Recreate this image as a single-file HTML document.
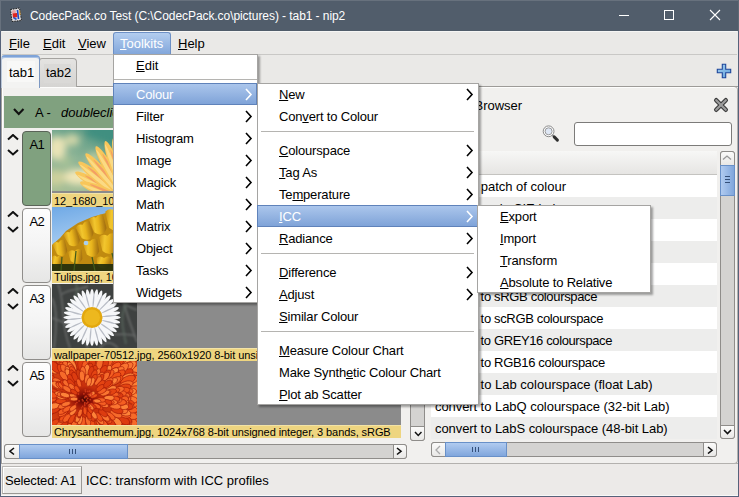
<!DOCTYPE html><html><head><meta charset="utf-8"><style>
*{margin:0;padding:0;box-sizing:border-box}
html,body{width:739px;height:497px;overflow:hidden;background:#eae9e7;position:relative;font-family:"Liberation Sans",sans-serif;color:#000}
.t{position:absolute;white-space:pre;line-height:1}
.u{text-decoration:underline;text-underline-offset:1px;text-decoration-thickness:1px}
.w{color:#fff}
</style></head><body>
<div style="position:absolute;left:0px;top:0px;width:739px;height:31px;background:#515d6b"></div>
<div style="position:absolute;left:0px;top:0px;width:739px;height:1px;background:#67717d"></div>
<div style="position:absolute;left:0px;top:0px;width:1px;height:31px;background:#67717d"></div>
<div style="position:absolute;left:738px;top:0px;width:1px;height:31px;background:#5f6975"></div>
<svg style="position:absolute;left:9px;top:7px" width="14" height="16">
<path d="M1.5,2.5 L10.5,1 L12.5,13.5 L3,14.5 Z" fill="#dcdadb" stroke="#1e1e1e" stroke-width="1" stroke-dasharray="1.5 1"/>
<circle cx="5" cy="5" r="2" fill="#e9a2a6"/><path d="M3.5,6.5 L8,6 L8.5,10 L4,11 Z" fill="#e2231d"/>
<path d="M8.5,3 L9.5,12" stroke="#1f49c9" stroke-width="1.6"/><path d="M10.5,3 L11,8" stroke="#e7a63a" stroke-width="1.2"/>
<path d="M4.5,10.5 L7.5,12.5" stroke="#2c56c6" stroke-width="1.6"/></svg>
<div class="t " style="left:30px;top:9.84px;font-size:12px;color:#fff;letter-spacing:-0.07px">CodecPack.co Test (C:\CodecPack.co\pictures) - tab1 - nip2</div>
<div style="position:absolute;left:619px;top:15px;width:10px;height:1px;background:#fff"></div>
<div style="position:absolute;left:664px;top:10px;width:10px;height:10px;border:1px solid #fff"></div>
<svg style="position:absolute;left:709px;top:9px" width="12" height="12"><path d="M1,1 L11,11 M11,1 L1,11" stroke="#fff" stroke-width="1.1"/></svg>
<div style="position:absolute;left:2px;top:31px;width:735px;height:1px;background:#f6f6f5"></div>
<div style="position:absolute;left:2px;top:54px;width:735px;height:1px;background:#c9c8c6"></div>
<div style="position:absolute;left:113px;top:32px;width:58px;height:23px;background:linear-gradient(#b3cdef,#80a5da);border:1px solid #6d90c5;border-bottom:none;border-radius:3px 3px 0 0"></div>
<div class="t " style="left:9px;top:36.99px;font-size:13px;"><span class="u">F</span>ile</div>
<div class="t " style="left:43px;top:36.99px;font-size:13px;"><span class="u">E</span>dit</div>
<div class="t " style="left:78px;top:36.99px;font-size:13px;"><span class="u">V</span>iew</div>
<div class="t " style="left:120px;top:36.99px;font-size:13px;color:#fff"><span class="u">T</span>oolkits</div>
<div class="t " style="left:178px;top:36.99px;font-size:13px;"><span class="u">H</span>elp</div>
<div style="position:absolute;left:1px;top:88px;width:737px;height:375px;background:#f1f0ee"></div>
<div style="position:absolute;left:1px;top:86px;width:737px;height:1px;background:#9d9b98"></div>
<div style="position:absolute;left:1px;top:87px;width:737px;height:1px;background:#fdfdfc"></div>
<div style="position:absolute;left:39px;top:58px;width:38px;height:29px;background:linear-gradient(#e4e3e1,#d5d4d2);border:1px solid #a5a3a0;border-bottom:none;border-radius:3px 4px 0 0"></div>
<div style="position:absolute;left:44px;top:64px;width:27px;height:19px;background:#dad9d7"></div>
<div class="t " style="left:46px;top:65.99px;font-size:13px;">tab2</div>
<div style="position:absolute;left:1px;top:55px;width:39px;height:33px;background:#f3f3f2;border-top:2px solid #7ea3d8;border-left:1px solid #b9c6d8;border-right:1px solid #7d98c2;border-radius:4px 4px 0 0;box-shadow:inset 0 1px 0 #a9c2e6"></div>
<div style="position:absolute;left:7px;top:61px;width:28px;height:21px;background:#f8f8f7"></div>
<div class="t " style="left:9px;top:65.99px;font-size:13px;">tab1</div>
<svg style="position:absolute;left:716px;top:63px" width="16" height="16">
<defs><linearGradient id="pg" x1="0" y1="0" x2="1" y2="1"><stop offset="0" stop-color="#a6d2f2"/><stop offset="1" stop-color="#5f9ed8"/></linearGradient></defs><path d="M6.3,1.3 h3.4 v5 h5 v3.4 h-5 v5 h-3.4 v-5 h-5 v-3.4 h5 z" fill="url(#pg)" stroke="#1d469a" stroke-width="1.1"/></svg>
<div style="position:absolute;left:4px;top:96px;width:423px;height:32px;background:#80a17f"></div>
<svg style="position:absolute;left:13px;top:108px" width="11.5" height="7.5"><polyline points="1,1 5.75,6.0 10.5,1" fill="none" stroke="#111" stroke-width="2.1"/></svg>
<div class="t " style="left:35px;top:105.99px;font-size:13px;">A - </div>
<div class="t " style="left:61px;top:105.99px;font-size:13px;font-style:italic">doubleclick to edit this toolkit</div>
<div style="position:absolute;left:52px;top:130px;width:349px;height:63px;background:#8b8b8b"></div>
<div style="position:absolute;left:52px;top:130px;width:98px;height:61px;overflow:hidden"><svg width="98" height="61"><defs>
<linearGradient id="fbg" x1="0" y1="1" x2="0.8" y2="0"><stop offset="0" stop-color="#a9bf95"/><stop offset="0.45" stop-color="#8db496"/><stop offset="1" stop-color="#3b8a7b"/></linearGradient>
<filter id="bl" x="-50%" y="-50%" width="200%" height="200%"><feGaussianBlur stdDeviation="3.5"/></filter>
</defs>
<rect width="98" height="61" fill="url(#fbg)"/>
<g filter="url(#bl)"><rect x="36" y="-8" width="70" height="22" fill="#3f8f80" transform="rotate(20 60 0)"/>
<ellipse cx="5" cy="18" rx="9" ry="12" fill="#e9e3b6"/><ellipse cx="20" cy="10" rx="8" ry="6" fill="#d2d6a8"/><ellipse cx="28" cy="47" rx="17" ry="8" fill="#f0e6b8"/><ellipse cx="4" cy="48" rx="9" ry="8" fill="#cdd09c"/><ellipse cx="42" cy="28" rx="7" ry="6" fill="#bccb9e"/><ellipse cx="14" cy="32" rx="6" ry="5" fill="#a7c296"/></g>
<g><ellipse cx="0" cy="-30.3" rx="5" ry="30.3" fill="#f8c65a" transform="translate(76,72) rotate(-60.4)"/><ellipse cx="1.8" cy="-27.3" rx="1.3" ry="23.3" fill="#ee6d74" opacity=".45" transform="translate(76,72) rotate(-60.4)"/><ellipse cx="-1.4" cy="-31.3" rx="1.8" ry="26.3" fill="#fde7a0" opacity=".6" transform="translate(76,72) rotate(-60.4)"/><ellipse cx="0" cy="-31.9" rx="5" ry="31.9" fill="#f8c65a" transform="translate(76,72) rotate(-50.9)"/><ellipse cx="1.8" cy="-28.9" rx="1.3" ry="24.9" fill="#ee6d74" opacity=".45" transform="translate(76,72) rotate(-50.9)"/><ellipse cx="-1.4" cy="-32.9" rx="1.8" ry="27.9" fill="#fde7a0" opacity=".6" transform="translate(76,72) rotate(-50.9)"/><ellipse cx="0" cy="-32.2" rx="5" ry="32.2" fill="#f8c65a" transform="translate(76,72) rotate(-41.1)"/><ellipse cx="1.8" cy="-29.2" rx="1.3" ry="25.2" fill="#ee6d74" opacity=".45" transform="translate(76,72) rotate(-41.1)"/><ellipse cx="-1.4" cy="-33.2" rx="1.8" ry="28.2" fill="#fde7a0" opacity=".6" transform="translate(76,72) rotate(-41.1)"/><ellipse cx="0" cy="-32.1" rx="5" ry="32.1" fill="#f8c65a" transform="translate(76,72) rotate(-29.9)"/><ellipse cx="1.8" cy="-29.1" rx="1.3" ry="25.1" fill="#ee6d74" opacity=".45" transform="translate(76,72) rotate(-29.9)"/><ellipse cx="-1.4" cy="-33.1" rx="1.8" ry="28.1" fill="#fde7a0" opacity=".6" transform="translate(76,72) rotate(-29.9)"/><ellipse cx="0" cy="-32.5" rx="5" ry="32.5" fill="#f8c65a" transform="translate(76,72) rotate(-20.4)"/><ellipse cx="1.8" cy="-29.5" rx="1.3" ry="25.5" fill="#ee6d74" opacity=".45" transform="translate(76,72) rotate(-20.4)"/><ellipse cx="-1.4" cy="-33.5" rx="1.8" ry="28.5" fill="#fde7a0" opacity=".6" transform="translate(76,72) rotate(-20.4)"/><ellipse cx="0" cy="-32.8" rx="5" ry="32.8" fill="#f8c65a" transform="translate(76,72) rotate(-12.7)"/><ellipse cx="1.8" cy="-29.8" rx="1.3" ry="25.8" fill="#ee6d74" opacity=".45" transform="translate(76,72) rotate(-12.7)"/><ellipse cx="-1.4" cy="-33.8" rx="1.8" ry="28.8" fill="#fde7a0" opacity=".6" transform="translate(76,72) rotate(-12.7)"/><ellipse cx="0" cy="-25.9" rx="5" ry="25.9" fill="#f8c65a" transform="translate(76,72) rotate(-67.6)"/><ellipse cx="1.8" cy="-22.9" rx="1.3" ry="18.9" fill="#ee6d74" opacity=".45" transform="translate(76,72) rotate(-67.6)"/><ellipse cx="-1.4" cy="-26.9" rx="1.8" ry="21.9" fill="#fde7a0" opacity=".6" transform="translate(76,72) rotate(-67.6)"/></g></svg></div>
<div style="position:absolute;left:52px;top:193px;width:349px;height:14px;background:#eed580;border-top:1px solid #f3e3a6"></div>
<div class="t " style="left:54px;top:196.19px;font-size:11px;letter-spacing:-0.08px">12_1680_1050 8-bit unsigned integer, 3 bands, sRGB</div>
<div style="position:absolute;left:22px;top:131px;width:29px;height:75px;background:#80a17f;border:1px solid #5a6458;border-radius:4px"></div>
<div class="t " style="left:29.5px;top:137.99px;font-size:13px;letter-spacing:-0.6px">A1</div>
<svg style="position:absolute;left:7px;top:134px" width="12" height="7"><polyline points="1,5.5 6.0,1 11,5.5" fill="none" stroke="#111" stroke-width="2"/></svg>
<svg style="position:absolute;left:7px;top:148.6px" width="12" height="7"><polyline points="1,1 6.0,5.5 11,1" fill="none" stroke="#111" stroke-width="2"/></svg>
<div style="position:absolute;left:52px;top:207px;width:349px;height:64px;background:#8b8b8b"></div>
<div style="position:absolute;left:52px;top:207px;width:85px;height:64px;overflow:hidden"><svg width="85" height="64"><defs><linearGradient id="sky" x1="0" y1="0" x2="0.3" y2="1"><stop offset="0" stop-color="#6fa9e6"/><stop offset="1" stop-color="#cde4f8"/></linearGradient>
<linearGradient id="tg" x1="0" y1="0" x2="1" y2="0.3"><stop offset="0" stop-color="#c88d10"/><stop offset="0.35" stop-color="#f2c62e"/><stop offset="0.6" stop-color="#e8b41c"/><stop offset="1" stop-color="#a87410"/></linearGradient></defs>
<rect width="85" height="64" fill="url(#sky)"/>
<path d="M0,38 L8,31 L14,24 L26,16 L40,10 L54,6 L70,3 L85,3 L85,64 L0,64z" fill="#c08a10"/><path d="M-9.0,-11.0 Q-4.5,-14.0 0,-11.0 Q4.5,-14.0 9.0,-11.0 L8.0,5.5 Q0,15.0 -8.0,5.5 Z" fill="url(#tg)" transform="translate(64,14) rotate(-10)"/><path d="M-7.0,-11.0 Q-3.5,-14.0 0,-11.0 Q3.5,-14.0 7.0,-11.0 L6.0,5.5 Q0,15.0 -6.0,5.5 Z" fill="url(#tg)" transform="translate(80,14) rotate(-5)"/><path d="M-7.5,-9.0 Q-3.75,-12.0 0,-9.0 Q3.75,-12.0 7.5,-9.0 L6.5,4.5 Q0,13.0 -6.5,4.5 Z" fill="url(#tg)" transform="translate(47,19) rotate(-20)"/><path d="M-7.5,-8.0 Q-3.75,-11.0 0,-8.0 Q3.75,-11.0 7.5,-8.0 L6.5,4.0 Q0,12.0 -6.5,4.0 Z" fill="url(#tg)" transform="translate(34,25) rotate(-25)"/><path d="M-7.0,-7.5 Q-3.5,-10.5 0,-7.5 Q3.5,-10.5 7.0,-7.5 L6.0,3.75 Q0,11.5 -6.0,3.75 Z" fill="url(#tg)" transform="translate(21,32) rotate(-25)"/><path d="M-6.5,-7.0 Q-3.25,-10.0 0,-7.0 Q3.25,-10.0 6.5,-7.0 L5.5,3.5 Q0,11.0 -5.5,3.5 Z" fill="url(#tg)" transform="translate(9,42) rotate(-20)"/><path d="M-8.5,-9.5 Q-4.25,-12.5 0,-9.5 Q4.25,-12.5 8.5,-9.5 L7.5,4.75 Q0,13.5 -7.5,4.75 Z" fill="url(#tg)" transform="translate(57,38) rotate(-10)"/><path d="M-7.5,-8.0 Q-3.75,-11.0 0,-8.0 Q3.75,-11.0 7.5,-8.0 L6.5,4.0 Q0,12.0 -6.5,4.0 Z" fill="url(#tg)" transform="translate(40,42) rotate(-15)"/><path d="M-7.5,-9.5 Q-3.75,-12.5 0,-9.5 Q3.75,-12.5 7.5,-9.5 L6.5,4.75 Q0,13.5 -6.5,4.75 Z" fill="url(#tg)" transform="translate(74,40) rotate(0)"/><path d="M-7.0,-6.0 Q-3.5,-9.0 0,-6.0 Q3.5,-9.0 7.0,-6.0 L6.0,3.0 Q0,10.0 -6.0,3.0 Z" fill="url(#tg)" transform="translate(24,50) rotate(-10)"/><path d="M-7.5,-5.0 Q-3.75,-8.0 0,-5.0 Q3.75,-8.0 7.5,-5.0 L6.5,2.5 Q0,9.0 -6.5,2.5 Z" fill="url(#tg)" transform="translate(52,56) rotate(0)"/><path d="M-6.0,-4.0 Q-3.0,-7.0 0,-4.0 Q3.0,-7.0 6.0,-4.0 L5.0,2.0 Q0,8.0 -5.0,2.0 Z" fill="url(#tg)" transform="translate(70,58) rotate(0)"/><path d="M-5.0,-5.0 Q-2.5,-8.0 0,-5.0 Q2.5,-8.0 5.0,-5.0 L4.0,2.5 Q0,9.0 -4.0,2.5 Z" fill="url(#tg)" transform="translate(5,55) rotate(0)"/><circle cx="34" cy="36" r="2.3" fill="#a9d0f2"/><rect y="57" width="85" height="7" fill="#1e2a0c" opacity=".9"/><g stroke="#3f5a1a" stroke-width="1.2"><path d="M24,44 L22,64"/><path d="M40,50 L43,64"/><path d="M60,46 L64,64"/><path d="M76,50 L78,64"/><path d="M10,50 L9,64"/></g>
<path d="M63,4 L64,16" stroke="#e0301c" stroke-width="1.2"/></svg></div>
<div style="position:absolute;left:52px;top:271px;width:349px;height:12px;background:#eed580;border-top:1px solid #f3e3a6"></div>
<div class="t " style="left:54px;top:272.19px;font-size:11px;letter-spacing:-0.08px">Tulips.jpg, 1024x768 8-bit unsigned integer, 3 bands, sRGB</div>
<div style="position:absolute;left:22px;top:208px;width:29px;height:75px;background:linear-gradient(#fdfdfd 0%,#f4f4f4 50%,#e6e6e5 100%);border:1px solid #8f8d8a;border-radius:4px"></div>
<div class="t " style="left:29.5px;top:214.99px;font-size:13px;letter-spacing:-0.6px">A2</div>
<svg style="position:absolute;left:7px;top:211px" width="12" height="7"><polyline points="1,5.5 6.0,1 11,5.5" fill="none" stroke="#111" stroke-width="2"/></svg>
<svg style="position:absolute;left:7px;top:225.6px" width="12" height="7"><polyline points="1,1 6.0,5.5 11,1" fill="none" stroke="#111" stroke-width="2"/></svg>
<div style="position:absolute;left:52px;top:284px;width:349px;height:64px;background:#8b8b8b"></div>
<div style="position:absolute;left:52px;top:284px;width:85px;height:64px;overflow:hidden"><svg width="85" height="64"><defs><filter id="bl2"><feGaussianBlur stdDeviation="0.5"/></filter><filter id="bl3"><feGaussianBlur stdDeviation="1"/></filter></defs><rect width="85" height="64" fill="#3e4140"/>
<g stroke="#7a7c7b" stroke-width="1.6" fill="none" opacity=".7" filter="url(#bl3)"><path d="M6,0 C14,20 8,40 18,64"/><path d="M70,12 C74,30 80,44 85,58"/><path d="M0,34 C20,40 30,50 36,64"/><path d="M10,10 C20,4 30,6 36,2"/><path d="M58,50 C66,52 72,48 84,52"/><path d="M62,0 C66,14 72,22 85,26"/><path d="M0,14 C6,24 4,50 2,64"/><path d="M48,64 C54,56 60,58 66,64"/></g>
<g stroke="#5c6a60" stroke-width="2.5" fill="none" opacity=".6" filter="url(#bl3)"><path d="M74,60 C70,40 66,30 80,10"/><path d="M24,0 C28,10 20,20 14,30"/></g>
<g filter="url(#bl2)"><ellipse cx="0" cy="-18.8" rx="2.2" ry="9.8" fill="#f6f7f9" transform="translate(40,33.5) rotate(0.0)" /><ellipse cx="0" cy="-18.8" rx="2.2" ry="9.8" fill="#f6f7f9" transform="translate(40,33.5) rotate(10.0)" /><ellipse cx="0" cy="-18.8" rx="2.2" ry="9.8" fill="#f6f7f9" transform="translate(40,33.5) rotate(20.0)" /><ellipse cx="0" cy="-18.8" rx="2.2" ry="9.8" fill="#f6f7f9" transform="translate(40,33.5) rotate(30.0)" /><ellipse cx="0" cy="-18.8" rx="2.2" ry="9.8" fill="#f6f7f9" transform="translate(40,33.5) rotate(40.0)" /><ellipse cx="0" cy="-18.8" rx="2.2" ry="9.8" fill="#f6f7f9" transform="translate(40,33.5) rotate(50.0)" /><ellipse cx="0" cy="-18.8" rx="2.2" ry="9.8" fill="#f6f7f9" transform="translate(40,33.5) rotate(60.0)" /><ellipse cx="0" cy="-18.8" rx="2.2" ry="9.8" fill="#f6f7f9" transform="translate(40,33.5) rotate(70.0)" /><ellipse cx="0" cy="-18.8" rx="2.2" ry="9.8" fill="#f6f7f9" transform="translate(40,33.5) rotate(80.0)" /><ellipse cx="0" cy="-18.8" rx="2.2" ry="9.8" fill="#f6f7f9" transform="translate(40,33.5) rotate(90.0)" /><ellipse cx="0" cy="-18.8" rx="2.2" ry="9.8" fill="#f6f7f9" transform="translate(40,33.5) rotate(100.0)" /><ellipse cx="0" cy="-18.8" rx="2.2" ry="9.8" fill="#f6f7f9" transform="translate(40,33.5) rotate(110.0)" /><ellipse cx="0" cy="-18.8" rx="2.2" ry="9.8" fill="#f6f7f9" transform="translate(40,33.5) rotate(120.0)" /><ellipse cx="0" cy="-18.8" rx="2.2" ry="9.8" fill="#f6f7f9" transform="translate(40,33.5) rotate(130.0)" /><ellipse cx="0" cy="-18.8" rx="2.2" ry="9.8" fill="#f6f7f9" transform="translate(40,33.5) rotate(140.0)" /><ellipse cx="0" cy="-18.8" rx="2.2" ry="9.8" fill="#f6f7f9" transform="translate(40,33.5) rotate(150.0)" /><ellipse cx="0" cy="-18.8" rx="2.2" ry="9.8" fill="#f6f7f9" transform="translate(40,33.5) rotate(160.0)" /><ellipse cx="0" cy="-18.8" rx="2.2" ry="9.8" fill="#f6f7f9" transform="translate(40,33.5) rotate(170.0)" /><ellipse cx="0" cy="-18.8" rx="2.2" ry="9.8" fill="#f6f7f9" transform="translate(40,33.5) rotate(180.0)" /><ellipse cx="0" cy="-18.8" rx="2.2" ry="9.8" fill="#f6f7f9" transform="translate(40,33.5) rotate(190.0)" /><ellipse cx="0" cy="-18.8" rx="2.2" ry="9.8" fill="#f6f7f9" transform="translate(40,33.5) rotate(200.0)" /><ellipse cx="0" cy="-18.8" rx="2.2" ry="9.8" fill="#f6f7f9" transform="translate(40,33.5) rotate(210.0)" /><ellipse cx="0" cy="-18.8" rx="2.2" ry="9.8" fill="#f6f7f9" transform="translate(40,33.5) rotate(220.0)" /><ellipse cx="0" cy="-18.8" rx="2.2" ry="9.8" fill="#f6f7f9" transform="translate(40,33.5) rotate(230.0)" /><ellipse cx="0" cy="-18.8" rx="2.2" ry="9.8" fill="#f6f7f9" transform="translate(40,33.5) rotate(240.0)" /><ellipse cx="0" cy="-18.8" rx="2.2" ry="9.8" fill="#f6f7f9" transform="translate(40,33.5) rotate(250.0)" /><ellipse cx="0" cy="-18.8" rx="2.2" ry="9.8" fill="#f6f7f9" transform="translate(40,33.5) rotate(260.0)" /><ellipse cx="0" cy="-18.8" rx="2.2" ry="9.8" fill="#f6f7f9" transform="translate(40,33.5) rotate(270.0)" /><ellipse cx="0" cy="-18.8" rx="2.2" ry="9.8" fill="#f6f7f9" transform="translate(40,33.5) rotate(280.0)" /><ellipse cx="0" cy="-18.8" rx="2.2" ry="9.8" fill="#f6f7f9" transform="translate(40,33.5) rotate(290.0)" /><ellipse cx="0" cy="-18.8" rx="2.2" ry="9.8" fill="#f6f7f9" transform="translate(40,33.5) rotate(300.0)" /><ellipse cx="0" cy="-18.8" rx="2.2" ry="9.8" fill="#f6f7f9" transform="translate(40,33.5) rotate(310.0)" /><ellipse cx="0" cy="-18.8" rx="2.2" ry="9.8" fill="#f6f7f9" transform="translate(40,33.5) rotate(320.0)" /><ellipse cx="0" cy="-18.8" rx="2.2" ry="9.8" fill="#f6f7f9" transform="translate(40,33.5) rotate(330.0)" /><ellipse cx="0" cy="-18.8" rx="2.2" ry="9.8" fill="#f6f7f9" transform="translate(40,33.5) rotate(340.0)" /><ellipse cx="0" cy="-18.8" rx="2.2" ry="9.8" fill="#f6f7f9" transform="translate(40,33.5) rotate(350.0)" /><ellipse cx="0" cy="-17.5" rx="0.7" ry="7.5" fill="#b9bdc6" transform="translate(40,33.5) rotate(5.0)" /><ellipse cx="0" cy="-17.5" rx="0.7" ry="7.5" fill="#b9bdc6" transform="translate(40,33.5) rotate(25.0)" /><ellipse cx="0" cy="-17.5" rx="0.7" ry="7.5" fill="#b9bdc6" transform="translate(40,33.5) rotate(45.0)" /><ellipse cx="0" cy="-17.5" rx="0.7" ry="7.5" fill="#b9bdc6" transform="translate(40,33.5) rotate(65.0)" /><ellipse cx="0" cy="-17.5" rx="0.7" ry="7.5" fill="#b9bdc6" transform="translate(40,33.5) rotate(85.0)" /><ellipse cx="0" cy="-17.5" rx="0.7" ry="7.5" fill="#b9bdc6" transform="translate(40,33.5) rotate(105.0)" /><ellipse cx="0" cy="-17.5" rx="0.7" ry="7.5" fill="#b9bdc6" transform="translate(40,33.5) rotate(125.0)" /><ellipse cx="0" cy="-17.5" rx="0.7" ry="7.5" fill="#b9bdc6" transform="translate(40,33.5) rotate(145.0)" /><ellipse cx="0" cy="-17.5" rx="0.7" ry="7.5" fill="#b9bdc6" transform="translate(40,33.5) rotate(165.0)" /><ellipse cx="0" cy="-17.5" rx="0.7" ry="7.5" fill="#b9bdc6" transform="translate(40,33.5) rotate(185.0)" /><ellipse cx="0" cy="-17.5" rx="0.7" ry="7.5" fill="#b9bdc6" transform="translate(40,33.5) rotate(205.0)" /><ellipse cx="0" cy="-17.5" rx="0.7" ry="7.5" fill="#b9bdc6" transform="translate(40,33.5) rotate(225.0)" /><ellipse cx="0" cy="-17.5" rx="0.7" ry="7.5" fill="#b9bdc6" transform="translate(40,33.5) rotate(245.0)" /><ellipse cx="0" cy="-17.5" rx="0.7" ry="7.5" fill="#b9bdc6" transform="translate(40,33.5) rotate(265.0)" /><ellipse cx="0" cy="-17.5" rx="0.7" ry="7.5" fill="#b9bdc6" transform="translate(40,33.5) rotate(285.0)" /><ellipse cx="0" cy="-17.5" rx="0.7" ry="7.5" fill="#b9bdc6" transform="translate(40,33.5) rotate(305.0)" /><ellipse cx="0" cy="-17.5" rx="0.7" ry="7.5" fill="#b9bdc6" transform="translate(40,33.5) rotate(325.0)" /><ellipse cx="0" cy="-17.5" rx="0.7" ry="7.5" fill="#b9bdc6" transform="translate(40,33.5) rotate(345.0)" /></g>
<circle cx="40" cy="33.5" r="10.5" fill="#e3a80e"/><circle cx="40" cy="33.5" r="8" fill="#edb81e"/></svg></div>
<div style="position:absolute;left:52px;top:348px;width:349px;height:13px;background:#eed580;border-top:1px solid #f3e3a6"></div>
<div class="t " style="left:54px;top:350.19px;font-size:11px;letter-spacing:-0.08px">wallpaper-70512.jpg, 2560x1920 8-bit unsigned integer, 3 bands, sRGB</div>
<div style="position:absolute;left:22px;top:285px;width:29px;height:75px;background:linear-gradient(#fdfdfd 0%,#f4f4f4 50%,#e6e6e5 100%);border:1px solid #8f8d8a;border-radius:4px"></div>
<div class="t " style="left:29.5px;top:291.99px;font-size:13px;letter-spacing:-0.6px">A3</div>
<svg style="position:absolute;left:7px;top:288px" width="12" height="7"><polyline points="1,5.5 6.0,1 11,5.5" fill="none" stroke="#111" stroke-width="2"/></svg>
<svg style="position:absolute;left:7px;top:302.6px" width="12" height="7"><polyline points="1,1 6.0,5.5 11,1" fill="none" stroke="#111" stroke-width="2"/></svg>
<div style="position:absolute;left:52px;top:361px;width:349px;height:64px;background:#8b8b8b"></div>
<div style="position:absolute;left:52px;top:361px;width:85px;height:64px;overflow:hidden"><svg width="85" height="64"><defs><radialGradient id="cg" cx="0.38" cy="0.6" r="0.7"><stop offset="0" stop-color="#3a0402"/><stop offset="0.12" stop-color="#8a1006"/><stop offset="0.3" stop-color="#c8300c"/><stop offset="1" stop-color="#d84814"/></radialGradient></defs>
<rect width="85" height="64" fill="url(#cg)"/><ellipse cx="87" cy="-1" rx="5.0" ry="9.9" fill="#f66a2a" stroke="#a01806" stroke-width=".6" transform="rotate(54 87 -1)"/><ellipse cx="87" cy="-0" rx="4.9" ry="9.8" fill="#dc3c10" stroke="#a01806" stroke-width=".6" transform="rotate(54 87 -0)"/><ellipse cx="82" cy="-6" rx="4.9" ry="9.8" fill="#dc3c10" stroke="#a01806" stroke-width=".6" transform="rotate(48 82 -6)"/><ellipse cx="83" cy="-5" rx="4.9" ry="9.8" fill="#e44412" stroke="#a01806" stroke-width=".6" transform="rotate(49 83 -5)"/><ellipse cx="84" cy="-3" rx="4.9" ry="9.8" fill="#f45e22" stroke="#a01806" stroke-width=".6" transform="rotate(51 84 -3)"/><ellipse cx="90" cy="70" rx="4.9" ry="9.8" fill="#f66a2a" stroke="#a01806" stroke-width=".6" transform="rotate(119 90 70)"/><ellipse cx="93" cy="12" rx="4.9" ry="9.7" fill="#f45e22" stroke="#a01806" stroke-width=".6" transform="rotate(66 93 12)"/><ellipse cx="80" cy="-7" rx="4.9" ry="9.7" fill="#f45e22" stroke="#a01806" stroke-width=".6" transform="rotate(46 80 -7)"/><ellipse cx="89" cy="5" rx="4.9" ry="9.7" fill="#f66a2a" stroke="#a01806" stroke-width=".6" transform="rotate(59 89 5)"/><ellipse cx="89" cy="69" rx="4.8" ry="9.6" fill="#ee5018" stroke="#a01806" stroke-width=".6" transform="rotate(118 89 69)"/><ellipse cx="92" cy="64" rx="4.8" ry="9.6" fill="#e44412" stroke="#a01806" stroke-width=".6" transform="rotate(113 92 64)"/><ellipse cx="80" cy="-3" rx="4.7" ry="9.4" fill="#e44412" stroke="#a01806" stroke-width=".6" transform="rotate(49 80 -3)"/><ellipse cx="76" cy="-7" rx="4.7" ry="9.4" fill="#ee5018" stroke="#a01806" stroke-width=".6" transform="rotate(43 76 -7)"/><ellipse cx="75" cy="-8" rx="4.7" ry="9.4" fill="#f45e22" stroke="#a01806" stroke-width=".6" transform="rotate(42 75 -8)"/><ellipse cx="90" cy="13" rx="4.7" ry="9.4" fill="#f45e22" stroke="#a01806" stroke-width=".6" transform="rotate(66 90 13)"/><ellipse cx="86" cy="5" rx="4.7" ry="9.4" fill="#ee5018" stroke="#a01806" stroke-width=".6" transform="rotate(58 86 5)"/><ellipse cx="85" cy="5" rx="4.7" ry="9.4" fill="#f45e22" stroke="#a01806" stroke-width=".6" transform="rotate(58 85 5)"/><ellipse cx="87" cy="9" rx="4.7" ry="9.4" fill="#ee5018" stroke="#a01806" stroke-width=".6" transform="rotate(61 87 9)"/><ellipse cx="81" cy="-0" rx="4.7" ry="9.4" fill="#f66a2a" stroke="#a01806" stroke-width=".6" transform="rotate(52 81 -0)"/><ellipse cx="88" cy="10" rx="4.7" ry="9.3" fill="#fa7430" stroke="#a01806" stroke-width=".6" transform="rotate(63 88 10)"/><ellipse cx="93" cy="28" rx="4.6" ry="9.2" fill="#f45e22" stroke="#a01806" stroke-width=".6" transform="rotate(80 93 28)"/><ellipse cx="91" cy="53" rx="4.6" ry="9.2" fill="#f66a2a" stroke="#a01806" stroke-width=".6" transform="rotate(104 91 53)"/><ellipse cx="90" cy="22" rx="4.6" ry="9.1" fill="#fa7430" stroke="#a01806" stroke-width=".6" transform="rotate(74 90 22)"/><ellipse cx="83" cy="6" rx="4.6" ry="9.1" fill="#f45e22" stroke="#a01806" stroke-width=".6" transform="rotate(57 83 6)"/><ellipse cx="85" cy="66" rx="4.6" ry="9.1" fill="#fd8238" stroke="#a01806" stroke-width=".6" transform="rotate(118 85 66)"/><ellipse cx="89" cy="59" rx="4.5" ry="9.1" fill="#f45e22" stroke="#a01806" stroke-width=".6" transform="rotate(110 89 59)"/><ellipse cx="89" cy="20" rx="4.5" ry="9.1" fill="#f45e22" stroke="#a01806" stroke-width=".6" transform="rotate(72 89 20)"/><ellipse cx="92" cy="39" rx="4.5" ry="9.1" fill="#dc3c10" stroke="#a01806" stroke-width=".6" transform="rotate(91 92 39)"/><ellipse cx="90" cy="52" rx="4.5" ry="9.0" fill="#ee5018" stroke="#a01806" stroke-width=".6" transform="rotate(104 90 52)"/><ellipse cx="89" cy="22" rx="4.5" ry="9.0" fill="#f66a2a" stroke="#a01806" stroke-width=".6" transform="rotate(74 89 22)"/><ellipse cx="89" cy="22" rx="4.5" ry="9.0" fill="#ee5018" stroke="#a01806" stroke-width=".6" transform="rotate(73 89 22)"/><ellipse cx="84" cy="10" rx="4.5" ry="9.0" fill="#fd8238" stroke="#a01806" stroke-width=".6" transform="rotate(61 84 10)"/><ellipse cx="-8" cy="-4" rx="4.5" ry="9.0" fill="#ee5018" stroke="#a01806" stroke-width=".6" transform="rotate(316 -8 -4)"/><ellipse cx="91" cy="44" rx="4.5" ry="9.0" fill="#f45e22" stroke="#a01806" stroke-width=".6" transform="rotate(96 91 44)"/><ellipse cx="87" cy="20" rx="4.4" ry="8.9" fill="#fa7430" stroke="#a01806" stroke-width=".6" transform="rotate(71 87 20)"/><ellipse cx="-3" cy="-7" rx="4.4" ry="8.8" fill="#f66a2a" stroke="#a01806" stroke-width=".6" transform="rotate(322 -3 -7)"/><ellipse cx="85" cy="16" rx="4.4" ry="8.8" fill="#fa7430" stroke="#a01806" stroke-width=".6" transform="rotate(67 85 16)"/><ellipse cx="88" cy="53" rx="4.4" ry="8.8" fill="#ee5018" stroke="#a01806" stroke-width=".6" transform="rotate(105 88 53)"/><ellipse cx="72" cy="-3" rx="4.4" ry="8.8" fill="#f45e22" stroke="#a01806" stroke-width=".6" transform="rotate(44 72 -3)"/><ellipse cx="77" cy="3" rx="4.4" ry="8.8" fill="#fd8238" stroke="#a01806" stroke-width=".6" transform="rotate(51 77 3)"/><ellipse cx="86" cy="56" rx="4.4" ry="8.8" fill="#fd8238" stroke="#a01806" stroke-width=".6" transform="rotate(108 86 56)"/><ellipse cx="87" cy="22" rx="4.4" ry="8.7" fill="#fa7430" stroke="#a01806" stroke-width=".6" transform="rotate(73 87 22)"/><ellipse cx="86" cy="57" rx="4.4" ry="8.7" fill="#fa7430" stroke="#a01806" stroke-width=".6" transform="rotate(109 86 57)"/><ellipse cx="87" cy="51" rx="4.3" ry="8.7" fill="#fd8238" stroke="#a01806" stroke-width=".6" transform="rotate(103 87 51)"/><ellipse cx="85" cy="58" rx="4.3" ry="8.6" fill="#dc3c10" stroke="#a01806" stroke-width=".6" transform="rotate(110 85 58)"/><ellipse cx="0" cy="-6" rx="4.3" ry="8.6" fill="#dc3c10" stroke="#a01806" stroke-width=".6" transform="rotate(324 0 -6)"/><ellipse cx="77" cy="6" rx="4.3" ry="8.6" fill="#fd8238" stroke="#a01806" stroke-width=".6" transform="rotate(53 77 6)"/><ellipse cx="81" cy="64" rx="4.3" ry="8.6" fill="#f66a2a" stroke="#a01806" stroke-width=".6" transform="rotate(118 81 64)"/><ellipse cx="86" cy="43" rx="4.2" ry="8.5" fill="#f45e22" stroke="#a01806" stroke-width=".6" transform="rotate(95 86 43)"/><ellipse cx="84" cy="23" rx="4.2" ry="8.5" fill="#e44412" stroke="#a01806" stroke-width=".6" transform="rotate(74 84 23)"/><ellipse cx="-1" cy="-4" rx="4.2" ry="8.5" fill="#f66a2a" stroke="#a01806" stroke-width=".6" transform="rotate(321 -1 -4)"/><ellipse cx="2" cy="-6" rx="4.2" ry="8.5" fill="#ee5018" stroke="#a01806" stroke-width=".6" transform="rotate(326 2 -6)"/><ellipse cx="-4" cy="-1" rx="4.2" ry="8.4" fill="#fd8238" stroke="#a01806" stroke-width=".6" transform="rotate(318 -4 -1)"/><ellipse cx="80" cy="63" rx="4.2" ry="8.4" fill="#fa7430" stroke="#a01806" stroke-width=".6" transform="rotate(117 80 63)"/><ellipse cx="82" cy="57" rx="4.2" ry="8.4" fill="#f45e22" stroke="#a01806" stroke-width=".6" transform="rotate(111 82 57)"/><ellipse cx="-2" cy="-2" rx="4.2" ry="8.4" fill="#ee5018" stroke="#a01806" stroke-width=".6" transform="rotate(319 -2 -2)"/><ellipse cx="75" cy="70" rx="4.2" ry="8.4" fill="#e44412" stroke="#a01806" stroke-width=".6" transform="rotate(126 75 70)"/><ellipse cx="-3" cy="-1" rx="4.2" ry="8.3" fill="#f66a2a" stroke="#a01806" stroke-width=".6" transform="rotate(318 -3 -1)"/><ellipse cx="83" cy="28" rx="4.1" ry="8.3" fill="#fd8238" stroke="#a01806" stroke-width=".6" transform="rotate(78 83 28)"/><ellipse cx="74" cy="7" rx="4.1" ry="8.2" fill="#fa7430" stroke="#a01806" stroke-width=".6" transform="rotate(53 74 7)"/><ellipse cx="84" cy="35" rx="4.1" ry="8.2" fill="#f66a2a" stroke="#a01806" stroke-width=".6" transform="rotate(86 84 35)"/><ellipse cx="-4" cy="2" rx="4.1" ry="8.2" fill="#f45e22" stroke="#a01806" stroke-width=".6" transform="rotate(315 -4 2)"/><ellipse cx="9" cy="-7" rx="4.1" ry="8.2" fill="#dc3c10" stroke="#a01806" stroke-width=".6" transform="rotate(333 9 -7)"/><ellipse cx="76" cy="66" rx="4.1" ry="8.2" fill="#fd8238" stroke="#a01806" stroke-width=".6" transform="rotate(122 76 66)"/><ellipse cx="1" cy="-2" rx="4.1" ry="8.1" fill="#f66a2a" stroke="#a01806" stroke-width=".6" transform="rotate(322 1 -2)"/><ellipse cx="80" cy="20" rx="4.1" ry="8.1" fill="#e44412" stroke="#a01806" stroke-width=".6" transform="rotate(68 80 20)"/><ellipse cx="83" cy="33" rx="4.1" ry="8.1" fill="#e44412" stroke="#a01806" stroke-width=".6" transform="rotate(83 83 33)"/><ellipse cx="-7" cy="70" rx="4.1" ry="8.1" fill="#f66a2a" stroke="#a01806" stroke-width=".6" transform="rotate(231 -7 70)"/><ellipse cx="78" cy="60" rx="4.1" ry="8.1" fill="#f66a2a" stroke="#a01806" stroke-width=".6" transform="rotate(115 78 60)"/><ellipse cx="81" cy="24" rx="4.1" ry="8.1" fill="#fd8238" stroke="#a01806" stroke-width=".6" transform="rotate(74 81 24)"/><ellipse cx="8" cy="-6" rx="4.0" ry="8.1" fill="#dc3c10" stroke="#a01806" stroke-width=".6" transform="rotate(331 8 -6)"/><ellipse cx="78" cy="16" rx="4.0" ry="8.1" fill="#f45e22" stroke="#a01806" stroke-width=".6" transform="rotate(64 78 16)"/><ellipse cx="82" cy="29" rx="4.0" ry="8.1" fill="#f66a2a" stroke="#a01806" stroke-width=".6" transform="rotate(79 82 29)"/><ellipse cx="79" cy="19" rx="4.0" ry="8.1" fill="#f66a2a" stroke="#a01806" stroke-width=".6" transform="rotate(67 79 19)"/><ellipse cx="82" cy="34" rx="4.0" ry="8.0" fill="#f66a2a" stroke="#a01806" stroke-width=".6" transform="rotate(85 82 34)"/><ellipse cx="15" cy="-8" rx="4.0" ry="8.0" fill="#dc3c10" stroke="#a01806" stroke-width=".6" transform="rotate(339 15 -8)"/><ellipse cx="63" cy="-0" rx="4.0" ry="8.0" fill="#f66a2a" stroke="#a01806" stroke-width=".6" transform="rotate(39 63 -0)"/><ellipse cx="73" cy="66" rx="4.0" ry="8.0" fill="#f66a2a" stroke="#a01806" stroke-width=".6" transform="rotate(124 73 66)"/><ellipse cx="66" cy="2" rx="4.0" ry="7.9" fill="#e44412" stroke="#a01806" stroke-width=".6" transform="rotate(43 66 2)"/><ellipse cx="74" cy="13" rx="4.0" ry="7.9" fill="#dc3c10" stroke="#a01806" stroke-width=".6" transform="rotate(59 74 13)"/><ellipse cx="76" cy="18" rx="3.9" ry="7.9" fill="#f45e22" stroke="#a01806" stroke-width=".6" transform="rotate(65 76 18)"/><ellipse cx="74" cy="64" rx="3.9" ry="7.9" fill="#f66a2a" stroke="#a01806" stroke-width=".6" transform="rotate(122 74 64)"/><ellipse cx="79" cy="53" rx="3.9" ry="7.9" fill="#f45e22" stroke="#a01806" stroke-width=".6" transform="rotate(108 79 53)"/><ellipse cx="78" cy="54" rx="3.9" ry="7.9" fill="#f66a2a" stroke="#a01806" stroke-width=".6" transform="rotate(109 78 54)"/><ellipse cx="70" cy="8" rx="3.9" ry="7.9" fill="#fa7430" stroke="#a01806" stroke-width=".6" transform="rotate(50 70 8)"/><ellipse cx="80" cy="44" rx="3.9" ry="7.8" fill="#fd8238" stroke="#a01806" stroke-width=".6" transform="rotate(97 80 44)"/><ellipse cx="75" cy="17" rx="3.9" ry="7.8" fill="#fd8238" stroke="#a01806" stroke-width=".6" transform="rotate(64 75 17)"/><ellipse cx="76" cy="19" rx="3.9" ry="7.8" fill="#ee5018" stroke="#a01806" stroke-width=".6" transform="rotate(66 76 19)"/><ellipse cx="-2" cy="6" rx="3.9" ry="7.8" fill="#ee5018" stroke="#a01806" stroke-width=".6" transform="rotate(314 -2 6)"/><ellipse cx="-7" cy="64" rx="3.9" ry="7.7" fill="#f66a2a" stroke="#a01806" stroke-width=".6" transform="rotate(237 -7 64)"/><ellipse cx="8" cy="-1" rx="3.9" ry="7.7" fill="#f66a2a" stroke="#a01806" stroke-width=".6" transform="rotate(328 8 -1)"/><ellipse cx="9" cy="-2" rx="3.9" ry="7.7" fill="#fa7430" stroke="#a01806" stroke-width=".6" transform="rotate(330 9 -2)"/><ellipse cx="79" cy="41" rx="3.9" ry="7.7" fill="#fd8238" stroke="#a01806" stroke-width=".6" transform="rotate(93 79 41)"/><ellipse cx="78" cy="48" rx="3.8" ry="7.7" fill="#f45e22" stroke="#a01806" stroke-width=".6" transform="rotate(102 78 48)"/><ellipse cx="1" cy="4" rx="3.8" ry="7.6" fill="#dc3c10" stroke="#a01806" stroke-width=".6" transform="rotate(318 1 4)"/><ellipse cx="79" cy="35" rx="3.8" ry="7.6" fill="#fd8238" stroke="#a01806" stroke-width=".6" transform="rotate(86 79 35)"/><ellipse cx="70" cy="65" rx="3.8" ry="7.6" fill="#f66a2a" stroke="#a01806" stroke-width=".6" transform="rotate(125 70 65)"/><ellipse cx="-5" cy="12" rx="3.8" ry="7.6" fill="#f66a2a" stroke="#a01806" stroke-width=".6" transform="rotate(305 -5 12)"/><ellipse cx="78" cy="43" rx="3.8" ry="7.6" fill="#f66a2a" stroke="#a01806" stroke-width=".6" transform="rotate(95 78 43)"/><ellipse cx="17" cy="-5" rx="3.8" ry="7.6" fill="#f45e22" stroke="#a01806" stroke-width=".6" transform="rotate(341 17 -5)"/><ellipse cx="30" cy="-7" rx="3.8" ry="7.6" fill="#ee5018" stroke="#a01806" stroke-width=".6" transform="rotate(357 30 -7)"/><ellipse cx="12" cy="-2" rx="3.8" ry="7.6" fill="#dc3c10" stroke="#a01806" stroke-width=".6" transform="rotate(334 12 -2)"/><ellipse cx="-0" cy="7" rx="3.8" ry="7.6" fill="#fd8238" stroke="#a01806" stroke-width=".6" transform="rotate(314 -0 7)"/><ellipse cx="73" cy="59" rx="3.8" ry="7.5" fill="#fd8238" stroke="#a01806" stroke-width=".6" transform="rotate(117 73 59)"/><ellipse cx="77" cy="31" rx="3.8" ry="7.5" fill="#fd8238" stroke="#a01806" stroke-width=".6" transform="rotate(80 77 31)"/><ellipse cx="78" cy="39" rx="3.8" ry="7.5" fill="#fa7430" stroke="#a01806" stroke-width=".6" transform="rotate(90 78 39)"/><ellipse cx="-7" cy="61" rx="3.8" ry="7.5" fill="#e44412" stroke="#a01806" stroke-width=".6" transform="rotate(241 -7 61)"/><ellipse cx="3" cy="5" rx="3.7" ry="7.5" fill="#dc3c10" stroke="#a01806" stroke-width=".6" transform="rotate(318 3 5)"/><ellipse cx="71" cy="62" rx="3.7" ry="7.5" fill="#fd8238" stroke="#a01806" stroke-width=".6" transform="rotate(122 71 62)"/><ellipse cx="71" cy="60" rx="3.7" ry="7.5" fill="#e44412" stroke="#a01806" stroke-width=".6" transform="rotate(119 71 60)"/><ellipse cx="20" cy="-4" rx="3.7" ry="7.5" fill="#f66a2a" stroke="#a01806" stroke-width=".6" transform="rotate(344 20 -4)"/><ellipse cx="11" cy="-1" rx="3.7" ry="7.5" fill="#f66a2a" stroke="#a01806" stroke-width=".6" transform="rotate(331 11 -1)"/><ellipse cx="73" cy="58" rx="3.7" ry="7.4" fill="#dc3c10" stroke="#a01806" stroke-width=".6" transform="rotate(115 73 58)"/><ellipse cx="63" cy="7" rx="3.7" ry="7.4" fill="#f45e22" stroke="#a01806" stroke-width=".6" transform="rotate(44 63 7)"/><ellipse cx="74" cy="24" rx="3.7" ry="7.4" fill="#f66a2a" stroke="#a01806" stroke-width=".6" transform="rotate(71 74 24)"/><ellipse cx="-8" cy="20" rx="3.7" ry="7.4" fill="#ee5018" stroke="#a01806" stroke-width=".6" transform="rotate(294 -8 20)"/><ellipse cx="3" cy="6" rx="3.7" ry="7.4" fill="#dc3c10" stroke="#a01806" stroke-width=".6" transform="rotate(318 3 6)"/><ellipse cx="-7" cy="19" rx="3.7" ry="7.4" fill="#fa7430" stroke="#a01806" stroke-width=".6" transform="rotate(296 -7 19)"/><ellipse cx="40" cy="-5" rx="3.7" ry="7.4" fill="#fd8238" stroke="#a01806" stroke-width=".6" transform="rotate(10 40 -5)"/><ellipse cx="71" cy="59" rx="3.7" ry="7.3" fill="#dc3c10" stroke="#a01806" stroke-width=".6" transform="rotate(118 71 59)"/><ellipse cx="-5" cy="17" rx="3.7" ry="7.3" fill="#fd8238" stroke="#a01806" stroke-width=".6" transform="rotate(299 -5 17)"/><ellipse cx="37" cy="-5" rx="3.7" ry="7.3" fill="#fa7430" stroke="#a01806" stroke-width=".6" transform="rotate(7 37 -5)"/><ellipse cx="66" cy="11" rx="3.7" ry="7.3" fill="#fa7430" stroke="#a01806" stroke-width=".6" transform="rotate(51 66 11)"/><ellipse cx="-5" cy="17" rx="3.6" ry="7.3" fill="#ee5018" stroke="#a01806" stroke-width=".6" transform="rotate(300 -5 17)"/><ellipse cx="75" cy="42" rx="3.6" ry="7.3" fill="#e44412" stroke="#a01806" stroke-width=".6" transform="rotate(95 75 42)"/><ellipse cx="56" cy="2" rx="3.6" ry="7.3" fill="#f45e22" stroke="#a01806" stroke-width=".6" transform="rotate(33 56 2)"/><ellipse cx="46" cy="-2" rx="3.6" ry="7.3" fill="#f45e22" stroke="#a01806" stroke-width=".6" transform="rotate(19 46 -2)"/><ellipse cx="75" cy="45" rx="3.6" ry="7.3" fill="#f66a2a" stroke="#a01806" stroke-width=".6" transform="rotate(98 75 45)"/><ellipse cx="-8" cy="25" rx="3.6" ry="7.2" fill="#dc3c10" stroke="#a01806" stroke-width=".6" transform="rotate(288 -8 25)"/><ellipse cx="74" cy="31" rx="3.6" ry="7.2" fill="#f45e22" stroke="#a01806" stroke-width=".6" transform="rotate(80 74 31)"/><ellipse cx="27" cy="-3" rx="3.6" ry="7.2" fill="#e44412" stroke="#a01806" stroke-width=".6" transform="rotate(353 27 -3)"/><ellipse cx="67" cy="14" rx="3.6" ry="7.2" fill="#ee5018" stroke="#a01806" stroke-width=".6" transform="rotate(54 67 14)"/><ellipse cx="64" cy="66" rx="3.6" ry="7.2" fill="#fa7430" stroke="#a01806" stroke-width=".6" transform="rotate(130 64 66)"/><ellipse cx="74" cy="45" rx="3.6" ry="7.1" fill="#dc3c10" stroke="#a01806" stroke-width=".6" transform="rotate(99 74 45)"/><ellipse cx="-3" cy="16" rx="3.6" ry="7.1" fill="#e44412" stroke="#a01806" stroke-width=".6" transform="rotate(302 -3 16)"/><ellipse cx="33" cy="-3" rx="3.6" ry="7.1" fill="#fd8238" stroke="#a01806" stroke-width=".6" transform="rotate(1 33 -3)"/><ellipse cx="72" cy="27" rx="3.6" ry="7.1" fill="#e44412" stroke="#a01806" stroke-width=".6" transform="rotate(73 72 27)"/><ellipse cx="72" cy="53" rx="3.6" ry="7.1" fill="#f45e22" stroke="#a01806" stroke-width=".6" transform="rotate(110 72 53)"/><ellipse cx="65" cy="64" rx="3.6" ry="7.1" fill="#f66a2a" stroke="#a01806" stroke-width=".6" transform="rotate(128 65 64)"/><ellipse cx="72" cy="51" rx="3.6" ry="7.1" fill="#fd8238" stroke="#a01806" stroke-width=".6" transform="rotate(108 72 51)"/><ellipse cx="-5" cy="22" rx="3.6" ry="7.1" fill="#e44412" stroke="#a01806" stroke-width=".6" transform="rotate(294 -5 22)"/><ellipse cx="21" cy="-1" rx="3.5" ry="7.1" fill="#fa7430" stroke="#a01806" stroke-width=".6" transform="rotate(343 21 -1)"/><ellipse cx="38" cy="-2" rx="3.5" ry="7.1" fill="#f66a2a" stroke="#a01806" stroke-width=".6" transform="rotate(8 38 -2)"/><ellipse cx="73" cy="34" rx="3.5" ry="7.1" fill="#dc3c10" stroke="#a01806" stroke-width=".6" transform="rotate(84 73 34)"/><ellipse cx="20" cy="-0" rx="3.5" ry="7.0" fill="#dc3c10" stroke="#a01806" stroke-width=".6" transform="rotate(343 20 -0)"/><ellipse cx="45" cy="0" rx="3.5" ry="7.0" fill="#ee5018" stroke="#a01806" stroke-width=".6" transform="rotate(18 45 0)"/><ellipse cx="17" cy="2" rx="3.5" ry="7.0" fill="#e44412" stroke="#a01806" stroke-width=".6" transform="rotate(337 17 2)"/><ellipse cx="71" cy="30" rx="3.5" ry="7.0" fill="#ee5018" stroke="#a01806" stroke-width=".6" transform="rotate(77 71 30)"/><ellipse cx="-6" cy="47" rx="3.5" ry="6.9" fill="#fd8238" stroke="#a01806" stroke-width=".6" transform="rotate(258 -6 47)"/><ellipse cx="72" cy="37" rx="3.5" ry="6.9" fill="#f66a2a" stroke="#a01806" stroke-width=".6" transform="rotate(87 72 37)"/><ellipse cx="64" cy="62" rx="3.5" ry="6.9" fill="#fd8238" stroke="#a01806" stroke-width=".6" transform="rotate(127 64 62)"/><ellipse cx="44" cy="1" rx="3.5" ry="6.9" fill="#f45e22" stroke="#a01806" stroke-width=".6" transform="rotate(17 44 1)"/><ellipse cx="72" cy="38" rx="3.4" ry="6.9" fill="#f66a2a" stroke="#a01806" stroke-width=".6" transform="rotate(89 72 38)"/><ellipse cx="61" cy="12" rx="3.4" ry="6.9" fill="#f45e22" stroke="#a01806" stroke-width=".6" transform="rotate(47 61 12)"/><ellipse cx="61" cy="12" rx="3.4" ry="6.9" fill="#fd8238" stroke="#a01806" stroke-width=".6" transform="rotate(47 61 12)"/><ellipse cx="2" cy="63" rx="3.4" ry="6.8" fill="#e44412" stroke="#a01806" stroke-width=".6" transform="rotate(231 2 63)"/><ellipse cx="52" cy="5" rx="3.4" ry="6.8" fill="#dc3c10" stroke="#a01806" stroke-width=".6" transform="rotate(30 52 5)"/><ellipse cx="23" cy="1" rx="3.4" ry="6.8" fill="#fa7430" stroke="#a01806" stroke-width=".6" transform="rotate(346 23 1)"/><ellipse cx="-5" cy="47" rx="3.4" ry="6.8" fill="#f66a2a" stroke="#a01806" stroke-width=".6" transform="rotate(258 -5 47)"/><ellipse cx="61" cy="64" rx="3.4" ry="6.8" fill="#e44412" stroke="#a01806" stroke-width=".6" transform="rotate(132 61 64)"/><ellipse cx="19" cy="2" rx="3.4" ry="6.8" fill="#ee5018" stroke="#a01806" stroke-width=".6" transform="rotate(340 19 2)"/><ellipse cx="71" cy="35" rx="3.4" ry="6.8" fill="#f66a2a" stroke="#a01806" stroke-width=".6" transform="rotate(85 71 35)"/><ellipse cx="-6" cy="32" rx="3.4" ry="6.8" fill="#fa7430" stroke="#a01806" stroke-width=".6" transform="rotate(280 -6 32)"/><ellipse cx="-4" cy="52" rx="3.4" ry="6.8" fill="#ee5018" stroke="#a01806" stroke-width=".6" transform="rotate(249 -4 52)"/><ellipse cx="65" cy="19" rx="3.4" ry="6.8" fill="#ee5018" stroke="#a01806" stroke-width=".6" transform="rotate(59 65 19)"/><ellipse cx="10" cy="70" rx="3.4" ry="6.8" fill="#fd8238" stroke="#a01806" stroke-width=".6" transform="rotate(216 10 70)"/><ellipse cx="64" cy="60" rx="3.4" ry="6.8" fill="#fd8238" stroke="#a01806" stroke-width=".6" transform="rotate(125 64 60)"/><ellipse cx="69" cy="49" rx="3.4" ry="6.8" fill="#fa7430" stroke="#a01806" stroke-width=".6" transform="rotate(105 69 49)"/><ellipse cx="36" cy="1" rx="3.4" ry="6.7" fill="#fa7430" stroke="#a01806" stroke-width=".6" transform="rotate(6 36 1)"/><ellipse cx="70" cy="42" rx="3.4" ry="6.7" fill="#fa7430" stroke="#a01806" stroke-width=".6" transform="rotate(96 70 42)"/><ellipse cx="11" cy="7" rx="3.4" ry="6.7" fill="#fd8238" stroke="#a01806" stroke-width=".6" transform="rotate(325 11 7)"/><ellipse cx="70" cy="45" rx="3.4" ry="6.7" fill="#fd8238" stroke="#a01806" stroke-width=".6" transform="rotate(100 70 45)"/><ellipse cx="70" cy="37" rx="3.4" ry="6.7" fill="#f66a2a" stroke="#a01806" stroke-width=".6" transform="rotate(88 70 37)"/><ellipse cx="47" cy="4" rx="3.4" ry="6.7" fill="#f66a2a" stroke="#a01806" stroke-width=".6" transform="rotate(23 47 4)"/><ellipse cx="24" cy="2" rx="3.4" ry="6.7" fill="#f66a2a" stroke="#a01806" stroke-width=".6" transform="rotate(348 24 2)"/><ellipse cx="63" cy="16" rx="3.4" ry="6.7" fill="#ee5018" stroke="#a01806" stroke-width=".6" transform="rotate(54 63 16)"/><ellipse cx="13" cy="71" rx="3.3" ry="6.7" fill="#e44412" stroke="#a01806" stroke-width=".6" transform="rotate(211 13 71)"/><ellipse cx="12" cy="7" rx="3.3" ry="6.7" fill="#ee5018" stroke="#a01806" stroke-width=".6" transform="rotate(327 12 7)"/><ellipse cx="70" cy="40" rx="3.3" ry="6.7" fill="#fa7430" stroke="#a01806" stroke-width=".6" transform="rotate(93 70 40)"/><ellipse cx="70" cy="38" rx="3.3" ry="6.6" fill="#f45e22" stroke="#a01806" stroke-width=".6" transform="rotate(89 70 38)"/><ellipse cx="51" cy="71" rx="3.3" ry="6.6" fill="#ee5018" stroke="#a01806" stroke-width=".6" transform="rotate(150 51 71)"/><ellipse cx="15" cy="6" rx="3.3" ry="6.6" fill="#f66a2a" stroke="#a01806" stroke-width=".6" transform="rotate(331 15 6)"/><ellipse cx="41" cy="3" rx="3.3" ry="6.6" fill="#fd8238" stroke="#a01806" stroke-width=".6" transform="rotate(14 41 3)"/><ellipse cx="10" cy="9" rx="3.3" ry="6.6" fill="#e44412" stroke="#a01806" stroke-width=".6" transform="rotate(323 10 9)"/><ellipse cx="40" cy="2" rx="3.3" ry="6.6" fill="#f45e22" stroke="#a01806" stroke-width=".6" transform="rotate(11 40 2)"/><ellipse cx="40" cy="3" rx="3.3" ry="6.6" fill="#dc3c10" stroke="#a01806" stroke-width=".6" transform="rotate(12 40 3)"/><ellipse cx="55" cy="10" rx="3.3" ry="6.6" fill="#fd8238" stroke="#a01806" stroke-width=".6" transform="rotate(38 55 10)"/><ellipse cx="14" cy="70" rx="3.3" ry="6.6" fill="#fd8238" stroke="#a01806" stroke-width=".6" transform="rotate(210 14 70)"/><ellipse cx="51" cy="70" rx="3.3" ry="6.6" fill="#f45e22" stroke="#a01806" stroke-width=".6" transform="rotate(150 51 70)"/><ellipse cx="-4" cy="36" rx="3.3" ry="6.6" fill="#f45e22" stroke="#a01806" stroke-width=".6" transform="rotate(274 -4 36)"/><ellipse cx="68" cy="33" rx="3.3" ry="6.5" fill="#f45e22" stroke="#a01806" stroke-width=".6" transform="rotate(82 68 33)"/><ellipse cx="22" cy="4" rx="3.3" ry="6.5" fill="#dc3c10" stroke="#a01806" stroke-width=".6" transform="rotate(343 22 4)"/><ellipse cx="54" cy="68" rx="3.3" ry="6.5" fill="#fa7430" stroke="#a01806" stroke-width=".6" transform="rotate(144 54 68)"/><ellipse cx="59" cy="63" rx="3.3" ry="6.5" fill="#dc3c10" stroke="#a01806" stroke-width=".6" transform="rotate(133 59 63)"/><ellipse cx="27" cy="3" rx="3.2" ry="6.5" fill="#dc3c10" stroke="#a01806" stroke-width=".6" transform="rotate(351 27 3)"/><ellipse cx="8" cy="64" rx="3.2" ry="6.5" fill="#f66a2a" stroke="#a01806" stroke-width=".6" transform="rotate(224 8 64)"/><ellipse cx="15" cy="69" rx="3.2" ry="6.5" fill="#f45e22" stroke="#a01806" stroke-width=".6" transform="rotate(209 15 69)"/><ellipse cx="21" cy="5" rx="3.2" ry="6.5" fill="#fd8238" stroke="#a01806" stroke-width=".6" transform="rotate(340 21 5)"/><ellipse cx="63" cy="20" rx="3.2" ry="6.5" fill="#f66a2a" stroke="#a01806" stroke-width=".6" transform="rotate(58 63 20)"/><ellipse cx="68" cy="41" rx="3.2" ry="6.5" fill="#e44412" stroke="#a01806" stroke-width=".6" transform="rotate(95 68 41)"/><ellipse cx="13" cy="9" rx="3.2" ry="6.5" fill="#f66a2a" stroke="#a01806" stroke-width=".6" transform="rotate(326 13 9)"/><ellipse cx="68" cy="41" rx="3.2" ry="6.4" fill="#f45e22" stroke="#a01806" stroke-width=".6" transform="rotate(95 68 41)"/><ellipse cx="11" cy="66" rx="3.2" ry="6.4" fill="#dc3c10" stroke="#a01806" stroke-width=".6" transform="rotate(219 11 66)"/><ellipse cx="57" cy="14" rx="3.2" ry="6.4" fill="#f45e22" stroke="#a01806" stroke-width=".6" transform="rotate(46 57 14)"/><ellipse cx="-2" cy="38" rx="3.2" ry="6.4" fill="#ee5018" stroke="#a01806" stroke-width=".6" transform="rotate(271 -2 38)"/><ellipse cx="66" cy="29" rx="3.2" ry="6.4" fill="#f66a2a" stroke="#a01806" stroke-width=".6" transform="rotate(74 66 29)"/><ellipse cx="64" cy="53" rx="3.2" ry="6.4" fill="#f66a2a" stroke="#a01806" stroke-width=".6" transform="rotate(115 64 53)"/><ellipse cx="29" cy="4" rx="3.2" ry="6.4" fill="#dc3c10" stroke="#a01806" stroke-width=".6" transform="rotate(353 29 4)"/><ellipse cx="58" cy="61" rx="3.2" ry="6.4" fill="#dc3c10" stroke="#a01806" stroke-width=".6" transform="rotate(131 58 61)"/><ellipse cx="51" cy="10" rx="3.2" ry="6.3" fill="#dc3c10" stroke="#a01806" stroke-width=".6" transform="rotate(33 51 10)"/><ellipse cx="65" cy="49" rx="3.2" ry="6.3" fill="#dc3c10" stroke="#a01806" stroke-width=".6" transform="rotate(109 65 49)"/><ellipse cx="19" cy="7" rx="3.1" ry="6.3" fill="#fd8238" stroke="#a01806" stroke-width=".6" transform="rotate(337 19 7)"/><ellipse cx="16" cy="68" rx="3.1" ry="6.3" fill="#fd8238" stroke="#a01806" stroke-width=".6" transform="rotate(209 16 68)"/><ellipse cx="0" cy="30" rx="3.1" ry="6.2" fill="#ee5018" stroke="#a01806" stroke-width=".6" transform="rotate(284 0 30)"/><ellipse cx="65" cy="35" rx="3.1" ry="6.2" fill="#dc3c10" stroke="#a01806" stroke-width=".6" transform="rotate(84 65 35)"/><ellipse cx="38" cy="71" rx="3.1" ry="6.2" fill="#e44412" stroke="#a01806" stroke-width=".6" transform="rotate(170 38 71)"/><ellipse cx="45" cy="69" rx="3.1" ry="6.2" fill="#f66a2a" stroke="#a01806" stroke-width=".6" transform="rotate(158 45 69)"/><ellipse cx="33" cy="6" rx="3.1" ry="6.2" fill="#f45e22" stroke="#a01806" stroke-width=".6" transform="rotate(1 33 6)"/><ellipse cx="1" cy="31" rx="3.1" ry="6.2" fill="#dc3c10" stroke="#a01806" stroke-width=".6" transform="rotate(283 1 31)"/><ellipse cx="54" cy="14" rx="3.1" ry="6.2" fill="#dc3c10" stroke="#a01806" stroke-width=".6" transform="rotate(42 54 14)"/><ellipse cx="60" cy="21" rx="3.1" ry="6.2" fill="#fd8238" stroke="#a01806" stroke-width=".6" transform="rotate(58 60 21)"/><ellipse cx="0" cy="34" rx="3.1" ry="6.2" fill="#ee5018" stroke="#a01806" stroke-width=".6" transform="rotate(278 0 34)"/><ellipse cx="2" cy="49" rx="3.1" ry="6.1" fill="#dc3c10" stroke="#a01806" stroke-width=".6" transform="rotate(250 2 49)"/><ellipse cx="46" cy="68" rx="3.1" ry="6.1" fill="#dc3c10" stroke="#a01806" stroke-width=".6" transform="rotate(155 46 68)"/><ellipse cx="20" cy="9" rx="3.1" ry="6.1" fill="#f45e22" stroke="#a01806" stroke-width=".6" transform="rotate(337 20 9)"/><ellipse cx="43" cy="68" rx="3.0" ry="6.1" fill="#ee5018" stroke="#a01806" stroke-width=".6" transform="rotate(160 43 68)"/><ellipse cx="6" cy="21" rx="3.0" ry="6.1" fill="#f66a2a" stroke="#a01806" stroke-width=".6" transform="rotate(304 6 21)"/><ellipse cx="2" cy="45" rx="3.0" ry="6.1" fill="#fd8238" stroke="#a01806" stroke-width=".6" transform="rotate(258 2 45)"/><ellipse cx="12" cy="15" rx="3.0" ry="6.0" fill="#f66a2a" stroke="#a01806" stroke-width=".6" transform="rotate(318 12 15)"/><ellipse cx="35" cy="70" rx="3.0" ry="6.0" fill="#ee5018" stroke="#a01806" stroke-width=".6" transform="rotate(176 35 70)"/><ellipse cx="17" cy="11" rx="3.0" ry="6.0" fill="#fd8238" stroke="#a01806" stroke-width=".6" transform="rotate(331 17 11)"/><ellipse cx="64" cy="39" rx="3.0" ry="6.0" fill="#f66a2a" stroke="#a01806" stroke-width=".6" transform="rotate(91 64 39)"/><ellipse cx="52" cy="63" rx="3.0" ry="6.0" fill="#f45e22" stroke="#a01806" stroke-width=".6" transform="rotate(142 52 63)"/><ellipse cx="5" cy="24" rx="3.0" ry="6.0" fill="#fd8238" stroke="#a01806" stroke-width=".6" transform="rotate(298 5 24)"/><ellipse cx="63" cy="45" rx="3.0" ry="6.0" fill="#fa7430" stroke="#a01806" stroke-width=".6" transform="rotate(102 63 45)"/><ellipse cx="38" cy="8" rx="3.0" ry="6.0" fill="#dc3c10" stroke="#a01806" stroke-width=".6" transform="rotate(10 38 8)"/><ellipse cx="53" cy="16" rx="3.0" ry="6.0" fill="#f66a2a" stroke="#a01806" stroke-width=".6" transform="rotate(42 53 16)"/><ellipse cx="42" cy="10" rx="3.0" ry="5.9" fill="#dc3c10" stroke="#a01806" stroke-width=".6" transform="rotate(19 42 10)"/><ellipse cx="28" cy="69" rx="3.0" ry="5.9" fill="#ee5018" stroke="#a01806" stroke-width=".6" transform="rotate(189 28 69)"/><ellipse cx="62" cy="30" rx="3.0" ry="5.9" fill="#ee5018" stroke="#a01806" stroke-width=".6" transform="rotate(73 62 30)"/><ellipse cx="58" cy="55" rx="3.0" ry="5.9" fill="#f45e22" stroke="#a01806" stroke-width=".6" transform="rotate(124 58 55)"/><ellipse cx="28" cy="69" rx="3.0" ry="5.9" fill="#f66a2a" stroke="#a01806" stroke-width=".6" transform="rotate(189 28 69)"/><ellipse cx="21" cy="11" rx="2.9" ry="5.9" fill="#ee5018" stroke="#a01806" stroke-width=".6" transform="rotate(337 21 11)"/><ellipse cx="55" cy="58" rx="2.9" ry="5.9" fill="#ee5018" stroke="#a01806" stroke-width=".6" transform="rotate(130 55 58)"/><ellipse cx="62" cy="34" rx="2.9" ry="5.9" fill="#fd8238" stroke="#a01806" stroke-width=".6" transform="rotate(82 62 34)"/><ellipse cx="17" cy="13" rx="2.9" ry="5.9" fill="#fd8238" stroke="#a01806" stroke-width=".6" transform="rotate(328 17 13)"/><ellipse cx="35" cy="9" rx="2.9" ry="5.8" fill="#fd8238" stroke="#a01806" stroke-width=".6" transform="rotate(5 35 9)"/><ellipse cx="62" cy="38" rx="2.9" ry="5.8" fill="#e44412" stroke="#a01806" stroke-width=".6" transform="rotate(89 62 38)"/><ellipse cx="45" cy="65" rx="2.9" ry="5.8" fill="#f66a2a" stroke="#a01806" stroke-width=".6" transform="rotate(155 45 65)"/><ellipse cx="62" cy="39" rx="2.9" ry="5.8" fill="#fa7430" stroke="#a01806" stroke-width=".6" transform="rotate(91 62 39)"/><ellipse cx="56" cy="21" rx="2.9" ry="5.8" fill="#f66a2a" stroke="#a01806" stroke-width=".6" transform="rotate(54 56 21)"/><ellipse cx="39" cy="67" rx="2.9" ry="5.8" fill="#ee5018" stroke="#a01806" stroke-width=".6" transform="rotate(166 39 67)"/><ellipse cx="61" cy="34" rx="2.9" ry="5.8" fill="#f45e22" stroke="#a01806" stroke-width=".6" transform="rotate(80 61 34)"/><ellipse cx="62" cy="38" rx="2.9" ry="5.8" fill="#ee5018" stroke="#a01806" stroke-width=".6" transform="rotate(89 62 38)"/><ellipse cx="43" cy="66" rx="2.9" ry="5.8" fill="#dc3c10" stroke="#a01806" stroke-width=".6" transform="rotate(159 43 66)"/><ellipse cx="59" cy="28" rx="2.9" ry="5.7" fill="#fd8238" stroke="#a01806" stroke-width=".6" transform="rotate(68 59 28)"/><ellipse cx="27" cy="66" rx="2.9" ry="5.7" fill="#fa7430" stroke="#a01806" stroke-width=".6" transform="rotate(191 27 66)"/><ellipse cx="45" cy="13" rx="2.8" ry="5.7" fill="#fa7430" stroke="#a01806" stroke-width=".6" transform="rotate(25 45 13)"/><ellipse cx="39" cy="11" rx="2.8" ry="5.7" fill="#dc3c10" stroke="#a01806" stroke-width=".6" transform="rotate(12 39 11)"/><ellipse cx="11" cy="57" rx="2.8" ry="5.7" fill="#e44412" stroke="#a01806" stroke-width=".6" transform="rotate(229 11 57)"/><ellipse cx="56" cy="24" rx="2.8" ry="5.6" fill="#ee5018" stroke="#a01806" stroke-width=".6" transform="rotate(58 56 24)"/><ellipse cx="55" cy="23" rx="2.8" ry="5.6" fill="#dc3c10" stroke="#a01806" stroke-width=".6" transform="rotate(56 55 23)"/><ellipse cx="34" cy="66" rx="2.8" ry="5.6" fill="#f45e22" stroke="#a01806" stroke-width=".6" transform="rotate(177 34 66)"/><ellipse cx="59" cy="31" rx="2.8" ry="5.6" fill="#e44412" stroke="#a01806" stroke-width=".6" transform="rotate(74 59 31)"/><ellipse cx="21" cy="14" rx="2.8" ry="5.6" fill="#dc3c10" stroke="#a01806" stroke-width=".6" transform="rotate(334 21 14)"/><ellipse cx="54" cy="56" rx="2.8" ry="5.6" fill="#ee5018" stroke="#a01806" stroke-width=".6" transform="rotate(129 54 56)"/><ellipse cx="22" cy="64" rx="2.8" ry="5.6" fill="#f66a2a" stroke="#a01806" stroke-width=".6" transform="rotate(202 22 64)"/><ellipse cx="9" cy="24" rx="2.8" ry="5.6" fill="#e44412" stroke="#a01806" stroke-width=".6" transform="rotate(301 9 24)"/><ellipse cx="60" cy="41" rx="2.8" ry="5.6" fill="#fa7430" stroke="#a01806" stroke-width=".6" transform="rotate(96 60 41)"/><ellipse cx="31" cy="11" rx="2.8" ry="5.6" fill="#f66a2a" stroke="#a01806" stroke-width=".6" transform="rotate(357 31 11)"/><ellipse cx="12" cy="57" rx="2.8" ry="5.6" fill="#fa7430" stroke="#a01806" stroke-width=".6" transform="rotate(228 12 57)"/><ellipse cx="9" cy="25" rx="2.8" ry="5.6" fill="#f45e22" stroke="#a01806" stroke-width=".6" transform="rotate(300 9 25)"/><ellipse cx="53" cy="56" rx="2.8" ry="5.6" fill="#fa7430" stroke="#a01806" stroke-width=".6" transform="rotate(131 53 56)"/><ellipse cx="48" cy="16" rx="2.8" ry="5.6" fill="#f66a2a" stroke="#a01806" stroke-width=".6" transform="rotate(35 48 16)"/><ellipse cx="33" cy="65" rx="2.8" ry="5.5" fill="#ee5018" stroke="#a01806" stroke-width=".6" transform="rotate(179 33 65)"/><ellipse cx="12" cy="56" rx="2.8" ry="5.5" fill="#ee5018" stroke="#a01806" stroke-width=".6" transform="rotate(230 12 56)"/><ellipse cx="42" cy="63" rx="2.7" ry="5.5" fill="#e44412" stroke="#a01806" stroke-width=".6" transform="rotate(159 42 63)"/><ellipse cx="48" cy="59" rx="2.7" ry="5.4" fill="#fa7430" stroke="#a01806" stroke-width=".6" transform="rotate(144 48 59)"/><ellipse cx="42" cy="14" rx="2.7" ry="5.4" fill="#e44412" stroke="#a01806" stroke-width=".6" transform="rotate(21 42 14)"/><ellipse cx="15" cy="57" rx="2.7" ry="5.4" fill="#f45e22" stroke="#a01806" stroke-width=".6" transform="rotate(224 15 57)"/><ellipse cx="48" cy="18" rx="2.7" ry="5.4" fill="#dc3c10" stroke="#a01806" stroke-width=".6" transform="rotate(37 48 18)"/><ellipse cx="11" cy="52" rx="2.7" ry="5.4" fill="#f45e22" stroke="#a01806" stroke-width=".6" transform="rotate(238 11 52)"/><ellipse cx="11" cy="25" rx="2.7" ry="5.4" fill="#f45e22" stroke="#a01806" stroke-width=".6" transform="rotate(303 11 25)"/><ellipse cx="13" cy="23" rx="2.7" ry="5.4" fill="#dc3c10" stroke="#a01806" stroke-width=".6" transform="rotate(308 13 23)"/><ellipse cx="8" cy="33" rx="2.7" ry="5.3" fill="#fd8238" stroke="#a01806" stroke-width=".6" transform="rotate(284 8 33)"/><ellipse cx="40" cy="62" rx="2.7" ry="5.3" fill="#ee5018" stroke="#a01806" stroke-width=".6" transform="rotate(162 40 62)"/><ellipse cx="19" cy="18" rx="2.7" ry="5.3" fill="#dc3c10" stroke="#a01806" stroke-width=".6" transform="rotate(328 19 18)"/><ellipse cx="57" cy="41" rx="2.6" ry="5.3" fill="#f45e22" stroke="#a01806" stroke-width=".6" transform="rotate(96 57 41)"/><ellipse cx="11" cy="50" rx="2.6" ry="5.3" fill="#f45e22" stroke="#a01806" stroke-width=".6" transform="rotate(241 11 50)"/><ellipse cx="57" cy="37" rx="2.6" ry="5.2" fill="#fd8238" stroke="#a01806" stroke-width=".6" transform="rotate(87 57 37)"/><ellipse cx="23" cy="16" rx="2.6" ry="5.2" fill="#dc3c10" stroke="#a01806" stroke-width=".6" transform="rotate(338 23 16)"/><ellipse cx="9" cy="40" rx="2.6" ry="5.2" fill="#e44412" stroke="#a01806" stroke-width=".6" transform="rotate(267 9 40)"/><ellipse cx="45" cy="18" rx="2.6" ry="5.2" fill="#f45e22" stroke="#a01806" stroke-width=".6" transform="rotate(33 45 18)"/><ellipse cx="15" cy="23" rx="2.6" ry="5.2" fill="#e44412" stroke="#a01806" stroke-width=".6" transform="rotate(311 15 23)"/><ellipse cx="15" cy="23" rx="2.6" ry="5.2" fill="#f66a2a" stroke="#a01806" stroke-width=".6" transform="rotate(312 15 23)"/><ellipse cx="20" cy="58" rx="2.6" ry="5.2" fill="#e44412" stroke="#a01806" stroke-width=".6" transform="rotate(213 20 58)"/><ellipse cx="51" cy="52" rx="2.6" ry="5.2" fill="#dc3c10" stroke="#a01806" stroke-width=".6" transform="rotate(126 51 52)"/><ellipse cx="30" cy="15" rx="2.6" ry="5.1" fill="#fa7430" stroke="#a01806" stroke-width=".6" transform="rotate(355 30 15)"/><ellipse cx="46" cy="20" rx="2.6" ry="5.1" fill="#f66a2a" stroke="#a01806" stroke-width=".6" transform="rotate(36 46 20)"/><ellipse cx="42" cy="18" rx="2.6" ry="5.1" fill="#e44412" stroke="#a01806" stroke-width=".6" transform="rotate(24 42 18)"/><ellipse cx="55" cy="42" rx="2.6" ry="5.1" fill="#dc3c10" stroke="#a01806" stroke-width=".6" transform="rotate(100 55 42)"/><ellipse cx="11" cy="45" rx="2.6" ry="5.1" fill="#f66a2a" stroke="#a01806" stroke-width=".6" transform="rotate(253 11 45)"/><ellipse cx="55" cy="41" rx="2.5" ry="5.1" fill="#dc3c10" stroke="#a01806" stroke-width=".6" transform="rotate(97 55 41)"/><ellipse cx="47" cy="56" rx="2.5" ry="5.1" fill="#ee5018" stroke="#a01806" stroke-width=".6" transform="rotate(142 47 56)"/><ellipse cx="54" cy="32" rx="2.5" ry="5.1" fill="#f45e22" stroke="#a01806" stroke-width=".6" transform="rotate(74 54 32)"/><ellipse cx="10" cy="36" rx="2.5" ry="5.1" fill="#fd8238" stroke="#a01806" stroke-width=".6" transform="rotate(277 10 36)"/><ellipse cx="10" cy="34" rx="2.5" ry="5.1" fill="#f66a2a" stroke="#a01806" stroke-width=".6" transform="rotate(280 10 34)"/><ellipse cx="31" cy="61" rx="2.5" ry="5.1" fill="#f45e22" stroke="#a01806" stroke-width=".6" transform="rotate(183 31 61)"/><ellipse cx="49" cy="23" rx="2.5" ry="5.0" fill="#e44412" stroke="#a01806" stroke-width=".6" transform="rotate(47 49 23)"/><ellipse cx="53" cy="32" rx="2.5" ry="5.0" fill="#fa7430" stroke="#a01806" stroke-width=".6" transform="rotate(73 53 32)"/><ellipse cx="36" cy="60" rx="2.5" ry="4.9" fill="#f66a2a" stroke="#a01806" stroke-width=".6" transform="rotate(170 36 60)"/><ellipse cx="19" cy="22" rx="2.5" ry="4.9" fill="#dc3c10" stroke="#a01806" stroke-width=".6" transform="rotate(320 19 22)"/><ellipse cx="28" cy="59" rx="2.4" ry="4.9" fill="#fd8238" stroke="#a01806" stroke-width=".6" transform="rotate(191 28 59)"/><ellipse cx="15" cy="28" rx="2.4" ry="4.9" fill="#f66a2a" stroke="#a01806" stroke-width=".6" transform="rotate(301 15 28)"/><ellipse cx="35" cy="18" rx="2.4" ry="4.8" fill="#fa7430" stroke="#a01806" stroke-width=".6" transform="rotate(8 35 18)"/><ellipse cx="25" cy="57" rx="2.4" ry="4.8" fill="#e44412" stroke="#a01806" stroke-width=".6" transform="rotate(202 25 57)"/><ellipse cx="52" cy="44" rx="2.4" ry="4.8" fill="#fa7430" stroke="#a01806" stroke-width=".6" transform="rotate(106 52 44)"/><ellipse cx="13" cy="35" rx="2.4" ry="4.8" fill="#ee5018" stroke="#a01806" stroke-width=".6" transform="rotate(280 13 35)"/><ellipse cx="13" cy="34" rx="2.4" ry="4.8" fill="#fd8238" stroke="#a01806" stroke-width=".6" transform="rotate(282 13 34)"/><ellipse cx="15" cy="48" rx="2.4" ry="4.8" fill="#f45e22" stroke="#a01806" stroke-width=".6" transform="rotate(241 15 48)"/><ellipse cx="40" cy="56" rx="2.4" ry="4.8" fill="#dc3c10" stroke="#a01806" stroke-width=".6" transform="rotate(156 40 56)"/><ellipse cx="50" cy="30" rx="2.4" ry="4.7" fill="#f45e22" stroke="#a01806" stroke-width=".6" transform="rotate(66 50 30)"/><ellipse cx="40" cy="21" rx="2.4" ry="4.7" fill="#fd8238" stroke="#a01806" stroke-width=".6" transform="rotate(23 40 21)"/><ellipse cx="26" cy="57" rx="2.3" ry="4.7" fill="#fd8238" stroke="#a01806" stroke-width=".6" transform="rotate(199 26 57)"/><ellipse cx="48" cy="27" rx="2.3" ry="4.7" fill="#e44412" stroke="#a01806" stroke-width=".6" transform="rotate(54 48 27)"/><ellipse cx="14" cy="43" rx="2.3" ry="4.7" fill="#fa7430" stroke="#a01806" stroke-width=".6" transform="rotate(255 14 43)"/><ellipse cx="42" cy="54" rx="2.3" ry="4.6" fill="#fd8238" stroke="#a01806" stroke-width=".6" transform="rotate(149 42 54)"/><ellipse cx="37" cy="21" rx="2.3" ry="4.6" fill="#fd8238" stroke="#a01806" stroke-width=".6" transform="rotate(15 37 21)"/><ellipse cx="50" cy="42" rx="2.3" ry="4.6" fill="#f45e22" stroke="#a01806" stroke-width=".6" transform="rotate(101 50 42)"/><ellipse cx="20" cy="26" rx="2.3" ry="4.5" fill="#f66a2a" stroke="#a01806" stroke-width=".6" transform="rotate(315 20 26)"/><ellipse cx="21" cy="51" rx="2.2" ry="4.5" fill="#fd8238" stroke="#a01806" stroke-width=".6" transform="rotate(223 21 51)"/><ellipse cx="27" cy="22" rx="2.2" ry="4.5" fill="#f45e22" stroke="#a01806" stroke-width=".6" transform="rotate(342 27 22)"/><ellipse cx="37" cy="55" rx="2.2" ry="4.5" fill="#fd8238" stroke="#a01806" stroke-width=".6" transform="rotate(166 37 55)"/><ellipse cx="49" cy="39" rx="2.2" ry="4.4" fill="#f45e22" stroke="#a01806" stroke-width=".6" transform="rotate(92 49 39)"/><ellipse cx="47" cy="46" rx="2.2" ry="4.4" fill="#e44412" stroke="#a01806" stroke-width=".6" transform="rotate(119 47 46)"/><ellipse cx="37" cy="54" rx="2.2" ry="4.4" fill="#e44412" stroke="#a01806" stroke-width=".6" transform="rotate(165 37 54)"/><ellipse cx="28" cy="53" rx="2.1" ry="4.3" fill="#dc3c10" stroke="#a01806" stroke-width=".6" transform="rotate(199 28 53)"/><ellipse cx="28" cy="52" rx="2.1" ry="4.2" fill="#f66a2a" stroke="#a01806" stroke-width=".6" transform="rotate(198 28 52)"/><ellipse cx="21" cy="47" rx="2.1" ry="4.2" fill="#fa7430" stroke="#a01806" stroke-width=".6" transform="rotate(232 21 47)"/><ellipse cx="45" cy="45" rx="2.1" ry="4.2" fill="#f45e22" stroke="#a01806" stroke-width=".6" transform="rotate(118 45 45)"/><ellipse cx="22" cy="31" rx="2.0" ry="4.0" fill="#dc3c10" stroke="#a01806" stroke-width=".6" transform="rotate(304 22 31)"/><ellipse cx="25" cy="28" rx="2.0" ry="4.0" fill="#ee5018" stroke="#a01806" stroke-width=".6" transform="rotate(325 25 28)"/><ellipse cx="45" cy="40" rx="2.0" ry="4.0" fill="#fd8238" stroke="#a01806" stroke-width=".6" transform="rotate(95 45 40)"/><ellipse cx="33" cy="50" rx="2.0" ry="3.9" fill="#f66a2a" stroke="#a01806" stroke-width=".6" transform="rotate(177 33 50)"/><ellipse cx="38" cy="49" rx="2.0" ry="3.9" fill="#e44412" stroke="#a01806" stroke-width=".6" transform="rotate(151 38 49)"/><ellipse cx="21" cy="35" rx="2.0" ry="3.9" fill="#fd8238" stroke="#a01806" stroke-width=".6" transform="rotate(288 21 35)"/><ellipse cx="21" cy="38" rx="2.0" ry="3.9" fill="#f66a2a" stroke="#a01806" stroke-width=".6" transform="rotate(272 21 38)"/><ellipse cx="33" cy="50" rx="1.9" ry="3.9" fill="#ee5018" stroke="#a01806" stroke-width=".6" transform="rotate(177 33 50)"/><ellipse cx="41" cy="45" rx="1.9" ry="3.8" fill="#dc3c10" stroke="#a01806" stroke-width=".6" transform="rotate(128 41 45)"/><ellipse cx="22" cy="38" rx="1.9" ry="3.8" fill="#fd8238" stroke="#a01806" stroke-width=".6" transform="rotate(270 22 38)"/><ellipse cx="42" cy="35" rx="1.9" ry="3.7" fill="#ee5018" stroke="#a01806" stroke-width=".6" transform="rotate(73 42 35)"/><ellipse cx="39" cy="46" rx="1.9" ry="3.7" fill="#fd8238" stroke="#a01806" stroke-width=".6" transform="rotate(137 39 46)"/><ellipse cx="40" cy="33" rx="1.8" ry="3.6" fill="#fd8238" stroke="#a01806" stroke-width=".6" transform="rotate(54 40 33)"/><circle cx="23.6" cy="43.0" r="0.9" fill="#d23a1a" opacity=".9"/><circle cx="35.8" cy="41.2" r="0.9" fill="#d23a1a" opacity=".9"/><circle cx="33.5" cy="30.5" r="0.9" fill="#d23a1a" opacity=".9"/><circle cx="30.4" cy="38.7" r="0.9" fill="#d23a1a" opacity=".9"/><circle cx="23.2" cy="34.9" r="0.9" fill="#d23a1a" opacity=".9"/><circle cx="32.8" cy="41.6" r="0.9" fill="#d23a1a" opacity=".9"/><circle cx="39.4" cy="33.1" r="0.9" fill="#d23a1a" opacity=".9"/><circle cx="34.8" cy="42.5" r="0.9" fill="#d23a1a" opacity=".9"/><circle cx="34.5" cy="35.5" r="0.9" fill="#d23a1a" opacity=".9"/><circle cx="39.3" cy="42.9" r="0.9" fill="#d23a1a" opacity=".9"/><circle cx="29.6" cy="46.8" r="0.9" fill="#d23a1a" opacity=".9"/><circle cx="41.8" cy="40.5" r="0.9" fill="#d23a1a" opacity=".9"/><circle cx="38.3" cy="38.6" r="0.9" fill="#d23a1a" opacity=".9"/><circle cx="34.7" cy="39.1" r="0.9" fill="#d23a1a" opacity=".9"/><circle cx="32.7" cy="44.5" r="0.9" fill="#d23a1a" opacity=".9"/><circle cx="31.9" cy="32.8" r="0.9" fill="#d23a1a" opacity=".9"/><circle cx="40.2" cy="43.7" r="0.9" fill="#d23a1a" opacity=".9"/><circle cx="32.7" cy="43.0" r="0.9" fill="#d23a1a" opacity=".9"/><circle cx="35.7" cy="37.3" r="0.9" fill="#d23a1a" opacity=".9"/><circle cx="38.6" cy="32.6" r="0.9" fill="#d23a1a" opacity=".9"/><circle cx="37.7" cy="30.1" r="0.9" fill="#d23a1a" opacity=".9"/><circle cx="38.4" cy="46.5" r="0.9" fill="#d23a1a" opacity=".9"/><circle cx="36.6" cy="44.7" r="0.9" fill="#d23a1a" opacity=".9"/><circle cx="37.0" cy="44.6" r="0.9" fill="#d23a1a" opacity=".9"/><circle cx="33.4" cy="35.3" r="0.9" fill="#d23a1a" opacity=".9"/><circle cx="33.9" cy="47.5" r="0.9" fill="#d23a1a" opacity=".9"/><circle cx="35.7" cy="30.4" r="0.9" fill="#d23a1a" opacity=".9"/><circle cx="30.6" cy="45.3" r="0.9" fill="#d23a1a" opacity=".9"/><circle cx="37.4" cy="34.8" r="0.9" fill="#d23a1a" opacity=".9"/><circle cx="24.9" cy="41.6" r="0.9" fill="#d23a1a" opacity=".9"/><circle cx="37.2" cy="30.4" r="0.9" fill="#d23a1a" opacity=".9"/><circle cx="31.0" cy="39.8" r="0.9" fill="#d23a1a" opacity=".9"/><circle cx="39.5" cy="34.9" r="0.9" fill="#d23a1a" opacity=".9"/><circle cx="26.5" cy="33.0" r="0.9" fill="#d23a1a" opacity=".9"/><circle cx="36.3" cy="33.3" r="0.9" fill="#d23a1a" opacity=".9"/><circle cx="33.3" cy="28.9" r="0.9" fill="#d23a1a" opacity=".9"/><circle cx="39.6" cy="32.5" r="0.9" fill="#d23a1a" opacity=".9"/><circle cx="27.1" cy="39.9" r="0.9" fill="#d23a1a" opacity=".9"/><circle cx="41.0" cy="34.8" r="0.9" fill="#d23a1a" opacity=".9"/><circle cx="32.7" cy="36.7" r="0.9" fill="#d23a1a" opacity=".9"/></svg></div>
<div style="position:absolute;left:52px;top:425px;width:349px;height:13px;background:#eed580;border-top:1px solid #f3e3a6"></div>
<div class="t " style="left:54px;top:427.19px;font-size:11px;letter-spacing:-0.08px">Chrysanthemum.jpg, 1024x768 8-bit unsigned integer, 3 bands, sRGB</div>
<div style="position:absolute;left:22px;top:362px;width:29px;height:75px;background:linear-gradient(#fdfdfd 0%,#f4f4f4 50%,#e6e6e5 100%);border:1px solid #8f8d8a;border-radius:4px"></div>
<div class="t " style="left:29.5px;top:368.99px;font-size:13px;letter-spacing:-0.6px">A5</div>
<svg style="position:absolute;left:7px;top:365px" width="12" height="7"><polyline points="1,5.5 6.0,1 11,5.5" fill="none" stroke="#111" stroke-width="2"/></svg>
<svg style="position:absolute;left:7px;top:379.6px" width="12" height="7"><polyline points="1,1 6.0,5.5 11,1" fill="none" stroke="#111" stroke-width="2"/></svg>
<div style="position:absolute;left:410px;top:130px;width:15px;height:311px;background:#d4d3d1;border:1px solid #8f8d8a;border-radius:3px"></div>
<div style="position:absolute;left:410px;top:426px;width:15px;height:15px;background:linear-gradient(#fbfbfa,#e9e8e6);border:1px solid #8f8d8a;border-radius:0 0 3px 3px"></div>
<svg style="position:absolute;left:413.5px;top:430.5px" width="8.5" height="6"><polyline points="1,1 4.25,4.5 7.5,1" fill="none" stroke="#111" stroke-width="1.5"/></svg>
<div style="position:absolute;left:4px;top:444px;width:403px;height:15px;background:#d4d3d1;border:1px solid #8f8d8a;border-radius:3px"></div>
<div style="position:absolute;left:4px;top:444px;width:16px;height:15px;background:linear-gradient(#fbfbfa,#e9e8e6);border:1px solid #8f8d8a;border-radius:3px 0 0 3px"></div>
<svg style="position:absolute;left:8.5px;top:447px" width="6" height="8.5"><polyline points="5,1 1,4.25 5,7.5" fill="none" stroke="#111" stroke-width="1.6"/></svg>
<div style="position:absolute;left:19px;top:444px;width:109px;height:15px;background:linear-gradient(#b0cbf0,#80a6dc);border:1px solid #6890c8"></div>
<div style="position:absolute;left:69px;top:449px;width:7px;height:5px;border-left:1px solid #34507a;border-right:1px solid #34507a"></div><div style="position:absolute;left:72px;top:449px;width:1px;height:5px;background:#34507a"></div>
<div style="position:absolute;left:393px;top:444px;width:14px;height:15px;background:linear-gradient(#fbfbfa,#e9e8e6);border:1px solid #8f8d8a;border-radius:0 3px 3px 0"></div>
<svg style="position:absolute;left:396px;top:447px" width="7" height="8.5"><polyline points="1,1 5,4.25 1,7.5" fill="none" stroke="#111" stroke-width="1.6"/></svg>
<div style="position:absolute;left:1px;top:463px;width:737px;height:1px;background:#b3b1ae"></div>
<div style="position:absolute;left:1px;top:464px;width:737px;height:31px;background:#eceae8"></div>
<div style="position:absolute;left:427px;top:86px;width:311px;height:378px;border:1px solid #9d9b98;border-left:none;border-top-color:#9d9b98;border-right-color:#b3b1ae;border-bottom-color:#b3b1ae;border-radius:0 4px 4px 0;background:#f1f0ee;box-shadow:inset 0 1px 0 #fdfdfc"></div>
<div class="t " style="left:434px;top:98.99px;font-size:13px;">Toolkit Browser</div>
<svg style="position:absolute;left:712px;top:96px" width="18" height="18">
<path d="M4.2,4.2 L13.8,13.8 M13.8,4.2 L4.2,13.8" stroke="#3a3a3a" stroke-width="4.4" stroke-linecap="round"/>
<path d="M4.2,4.2 L13.8,13.8 M13.8,4.2 L4.2,13.8" stroke="#9d9d9d" stroke-width="2.2" stroke-linecap="round"/></svg>
<svg style="position:absolute;left:540px;top:123px" width="22" height="22">
<circle cx="8.6" cy="8.3" r="5.4" fill="#fbfbfb" stroke="#8a8a8a" stroke-width="1"/>
<circle cx="8.6" cy="8.3" r="3.5" fill="#dfe7f4" stroke="#9a9a9a" stroke-width="1"/>
<path d="M12.4,12.1 L14,13.7" stroke="#8a8a8a" stroke-width="1.6"/>
<path d="M14.2,13.9 L17.4,17.1" stroke="#2e2e2e" stroke-width="3" stroke-linecap="round"/></svg>
<div style="position:absolute;left:574px;top:122px;width:158px;height:24px;background:#fff;border:1px solid #7c7b79;border-radius:3px"></div>
<div style="position:absolute;left:431px;top:151px;width:286px;height:24px;background:linear-gradient(#f7f7f6,#e6e5e3);border-bottom:1px solid #c4c3c0"></div>
<div style="position:absolute;left:431px;top:175px;width:286px;height:22px;background:#ffffff"></div>
<div class="t " style="left:435px;top:179.99px;font-size:13px;"><span style="letter-spacing:-0.08px">make a </span><span style="letter-spacing:0px">patch of colour</span></div>
<div style="position:absolute;left:431px;top:197px;width:286px;height:22px;background:#ededec"></div>
<div class="t " style="left:435px;top:201.99px;font-size:13px;"><span style="letter-spacing:-0.08px"></span><span style="letter-spacing:-0.08px">pick colour in CIE Lab space</span></div>
<div style="position:absolute;left:431px;top:219px;width:286px;height:22px;background:#ffffff"></div>
<div class="t " style="left:435px;top:223.99px;font-size:13px;"><span style="letter-spacing:-0.08px">convert </span><span style="letter-spacing:-0.08px">to XYZ</span></div>
<div style="position:absolute;left:431px;top:241px;width:286px;height:22px;background:#ededec"></div>
<div class="t " style="left:435px;top:245.99px;font-size:13px;"><span style="letter-spacing:-0.08px">convert </span><span style="letter-spacing:-0.08px">to Yxy</span></div>
<div style="position:absolute;left:431px;top:263px;width:286px;height:22px;background:#ffffff"></div>
<div class="t " style="left:435px;top:267.99px;font-size:13px;"><span style="letter-spacing:-0.08px">convert </span><span style="letter-spacing:-0.08px">to LCh</span></div>
<div style="position:absolute;left:431px;top:285px;width:286px;height:22px;background:#ededec"></div>
<div class="t " style="left:435px;top:289.99px;font-size:13px;"><span style="letter-spacing:-0.08px">convert </span><span style="letter-spacing:-0.33px">to sRGB colourspace</span></div>
<div style="position:absolute;left:431px;top:307px;width:286px;height:22px;background:#ffffff"></div>
<div class="t " style="left:435px;top:311.99px;font-size:13px;"><span style="letter-spacing:-0.08px">convert </span><span style="letter-spacing:-0.345px">to scRGB colourspace</span></div>
<div style="position:absolute;left:431px;top:329px;width:286px;height:22px;background:#ededec"></div>
<div class="t " style="left:435px;top:333.99px;font-size:13px;"><span style="letter-spacing:-0.08px">convert </span><span style="letter-spacing:-0.38px">to GREY16 colourspace</span></div>
<div style="position:absolute;left:431px;top:351px;width:286px;height:22px;background:#ffffff"></div>
<div class="t " style="left:435px;top:355.99px;font-size:13px;"><span style="letter-spacing:-0.08px">convert </span><span style="letter-spacing:-0.33px">to RGB16 colourspace</span></div>
<div style="position:absolute;left:431px;top:373px;width:286px;height:22px;background:#ededec"></div>
<div class="t " style="left:435px;top:377.99px;font-size:13px;"><span style="letter-spacing:-0.08px">convert </span><span style="letter-spacing:0px">to Lab colourspace (float Lab)</span></div>
<div style="position:absolute;left:431px;top:395px;width:286px;height:22px;background:#ffffff"></div>
<div class="t " style="left:435px;top:399.99px;font-size:13px;"><span style="letter-spacing:-0.08px">convert </span><span style="letter-spacing:-0.035px">to LabQ colourspace (32-bit Lab)</span></div>
<div style="position:absolute;left:431px;top:417px;width:286px;height:22px;background:#ededec"></div>
<div class="t " style="left:435px;top:421.99px;font-size:13px;"><span style="letter-spacing:-0.08px">convert </span><span style="letter-spacing:-0.05px">to LabS colourspace (48-bit Lab)</span></div>
<div style="position:absolute;left:720px;top:151px;width:15px;height:288px;background:#d4d3d1;border:1px solid #8f8d8a;border-radius:3px"></div>
<div style="position:absolute;left:720px;top:151px;width:15px;height:15px;background:linear-gradient(#fbfbfa,#e9e8e6);border:1px solid #8f8d8a;border-radius:3px 3px 0 0"></div>
<svg style="position:absolute;left:722px;top:155px" width="10" height="6"><polyline points="1,4.5 5.0,1 9,4.5" fill="none" stroke="#999" stroke-width="1.3"/></svg>
<div style="position:absolute;left:720px;top:165px;width:15px;height:31px;background:linear-gradient(90deg,#b0cbf0,#80a6dc);border:1px solid #6890c8"></div>
<div style="position:absolute;left:725px;top:176px;width:5px;height:1px;background:#34507a"></div><div style="position:absolute;left:725px;top:179px;width:5px;height:1px;background:#34507a"></div><div style="position:absolute;left:725px;top:182px;width:5px;height:1px;background:#34507a"></div>
<div style="position:absolute;left:720px;top:425px;width:15px;height:14px;background:linear-gradient(#fbfbfa,#e9e8e6);border:1px solid #8f8d8a;border-radius:0 0 3px 3px"></div>
<svg style="position:absolute;left:723px;top:428.5px" width="9" height="6"><polyline points="1,1 4.5,4.5 8,1" fill="none" stroke="#111" stroke-width="1.6"/></svg>
<div style="position:absolute;left:431px;top:442px;width:286px;height:15px;background:#d4d3d1;border:1px solid #8f8d8a;border-radius:3px"></div>
<div style="position:absolute;left:431px;top:442px;width:15px;height:15px;background:linear-gradient(#fbfbfa,#e9e8e6);border:1px solid #8f8d8a;border-radius:3px 0 0 3px"></div>
<svg style="position:absolute;left:435px;top:445px" width="6" height="10"><polyline points="5,1 1,5.0 5,9" fill="none" stroke="#aaa" stroke-width="1.3"/></svg>
<div style="position:absolute;left:445px;top:442px;width:62px;height:15px;background:linear-gradient(#b0cbf0,#80a6dc);border:1px solid #6890c8"></div>
<div style="position:absolute;left:472px;top:447px;width:7px;height:5px;border-left:1px solid #34507a;border-right:1px solid #34507a"></div><div style="position:absolute;left:475px;top:447px;width:1px;height:5px;background:#34507a"></div>
<div style="position:absolute;left:703px;top:442px;width:14px;height:15px;background:linear-gradient(#fbfbfa,#e9e8e6);border:1px solid #8f8d8a;border-radius:0 3px 3px 0"></div>
<svg style="position:absolute;left:706.5px;top:445.5px" width="7" height="8.5"><polyline points="1,1 5,4.25 1,7.5" fill="none" stroke="#111" stroke-width="1.6"/></svg>
<div style="position:absolute;left:2px;top:466px;width:80px;height:28px;border:1px solid #9a9894;border-top-color:#b9b7b4;border-left-color:#b9b7b4;background:#ebeae8;box-shadow:inset 1px 1px 0 #fff"></div>
<div class="t " style="left:5px;top:473.99px;font-size:13px;letter-spacing:-0.17px">Selected: A1</div>
<div class="t " style="left:86px;top:473.99px;font-size:13px;">ICC: transform with ICC profiles</div>
<div style="position:absolute;left:113px;top:54px;width:145px;height:249px;background:#fff;border:1px solid #a5a4a2;box-shadow:2px 2px 2px rgba(0,0,0,.35)"></div>
<div class="t " style="left:136px;top:58.99px;font-size:13px;"><span class="u">E</span>dit</div>
<div style="position:absolute;left:114px;top:79px;width:143px;height:1px;background:#b5b4b1"></div>
<div style="position:absolute;left:113px;top:83px;width:144px;height:22px;background:linear-gradient(#abc6ec,#7fa3d8);border:1px solid #5f82ba"></div>
<div class="t " style="left:136px;top:87.99px;font-size:13px;color:#fff;letter-spacing:-0.17px">Colour</div>
<svg style="position:absolute;left:245px;top:88px" width="8" height="13"><polyline points="1,1 6,6.5 1,12" fill="none" stroke="#fff" stroke-width="1.6"/></svg>
<div class="t " style="left:136px;top:109.99px;font-size:13px;color:#000;letter-spacing:-0.17px">Filter</div>
<svg style="position:absolute;left:245px;top:110px" width="8" height="13"><polyline points="1,1 6,6.5 1,12" fill="none" stroke="#000" stroke-width="1.6"/></svg>
<div class="t " style="left:136px;top:131.99px;font-size:13px;color:#000;letter-spacing:-0.17px">Histogram</div>
<svg style="position:absolute;left:245px;top:132px" width="8" height="13"><polyline points="1,1 6,6.5 1,12" fill="none" stroke="#000" stroke-width="1.6"/></svg>
<div class="t " style="left:136px;top:153.99px;font-size:13px;color:#000;letter-spacing:-0.17px">Image</div>
<svg style="position:absolute;left:245px;top:154px" width="8" height="13"><polyline points="1,1 6,6.5 1,12" fill="none" stroke="#000" stroke-width="1.6"/></svg>
<div class="t " style="left:136px;top:175.99px;font-size:13px;color:#000;letter-spacing:-0.17px">Magick</div>
<svg style="position:absolute;left:245px;top:176px" width="8" height="13"><polyline points="1,1 6,6.5 1,12" fill="none" stroke="#000" stroke-width="1.6"/></svg>
<div class="t " style="left:136px;top:197.99px;font-size:13px;color:#000;letter-spacing:-0.17px">Math</div>
<svg style="position:absolute;left:245px;top:198px" width="8" height="13"><polyline points="1,1 6,6.5 1,12" fill="none" stroke="#000" stroke-width="1.6"/></svg>
<div class="t " style="left:136px;top:219.99px;font-size:13px;color:#000;letter-spacing:-0.17px">Matrix</div>
<svg style="position:absolute;left:245px;top:220px" width="8" height="13"><polyline points="1,1 6,6.5 1,12" fill="none" stroke="#000" stroke-width="1.6"/></svg>
<div class="t " style="left:136px;top:241.99px;font-size:13px;color:#000;letter-spacing:-0.17px">Object</div>
<svg style="position:absolute;left:245px;top:242px" width="8" height="13"><polyline points="1,1 6,6.5 1,12" fill="none" stroke="#000" stroke-width="1.6"/></svg>
<div class="t " style="left:136px;top:263.99px;font-size:13px;color:#000;letter-spacing:-0.17px">Tasks</div>
<svg style="position:absolute;left:245px;top:264px" width="8" height="13"><polyline points="1,1 6,6.5 1,12" fill="none" stroke="#000" stroke-width="1.6"/></svg>
<div class="t " style="left:136px;top:285.99px;font-size:13px;color:#000;letter-spacing:-0.17px">Widgets</div>
<svg style="position:absolute;left:245px;top:286px" width="8" height="13"><polyline points="1,1 6,6.5 1,12" fill="none" stroke="#000" stroke-width="1.6"/></svg>
<div style="position:absolute;left:257px;top:83px;width:222px;height:322px;background:#fff;border:1px solid #a5a4a2;box-shadow:2px 2px 2px rgba(0,0,0,.35)"></div>
<div class="t " style="left:279px;top:87.99px;font-size:13px;color:#000;letter-spacing:-0.17px"><span class="u">N</span>ew</div>
<svg style="position:absolute;left:466px;top:88px" width="8" height="13"><polyline points="1,1 6,6.5 1,12" fill="none" stroke="#000" stroke-width="1.6"/></svg>
<div class="t " style="left:279px;top:109.99px;font-size:13px;color:#000;letter-spacing:-0.17px">Con<span class="u">v</span>ert to Colour</div>
<div style="position:absolute;left:261px;top:131px;width:213px;height:1px;background:#b5b4b1"></div>
<div class="t " style="left:279px;top:143.99px;font-size:13px;color:#000;letter-spacing:-0.17px"><span class="u">C</span>olourspace</div>
<svg style="position:absolute;left:466px;top:144px" width="8" height="13"><polyline points="1,1 6,6.5 1,12" fill="none" stroke="#000" stroke-width="1.6"/></svg>
<div class="t " style="left:279px;top:165.99px;font-size:13px;color:#000;letter-spacing:-0.17px"><span class="u">T</span>ag As</div>
<svg style="position:absolute;left:466px;top:166px" width="8" height="13"><polyline points="1,1 6,6.5 1,12" fill="none" stroke="#000" stroke-width="1.6"/></svg>
<div class="t " style="left:279px;top:187.99px;font-size:13px;color:#000;letter-spacing:-0.17px">Te<span class="u">m</span>perature</div>
<svg style="position:absolute;left:466px;top:188px" width="8" height="13"><polyline points="1,1 6,6.5 1,12" fill="none" stroke="#000" stroke-width="1.6"/></svg>
<div style="position:absolute;left:257px;top:205px;width:221px;height:22px;background:linear-gradient(#abc6ec,#7fa3d8);border:1px solid #5f82ba"></div>
<div class="t " style="left:279px;top:209.99px;font-size:13px;color:#fff;letter-spacing:-0.17px"><span class="u">I</span>CC</div>
<svg style="position:absolute;left:466px;top:210px" width="8" height="13"><polyline points="1,1 6,6.5 1,12" fill="none" stroke="#fff" stroke-width="1.6"/></svg>
<div class="t " style="left:279px;top:231.99px;font-size:13px;color:#000;letter-spacing:-0.17px"><span class="u">R</span>adiance</div>
<svg style="position:absolute;left:466px;top:232px" width="8" height="13"><polyline points="1,1 6,6.5 1,12" fill="none" stroke="#000" stroke-width="1.6"/></svg>
<div style="position:absolute;left:261px;top:253px;width:213px;height:1px;background:#b5b4b1"></div>
<div class="t " style="left:279px;top:265.99px;font-size:13px;color:#000;letter-spacing:-0.17px"><span class="u">D</span>ifference</div>
<svg style="position:absolute;left:466px;top:266px" width="8" height="13"><polyline points="1,1 6,6.5 1,12" fill="none" stroke="#000" stroke-width="1.6"/></svg>
<div class="t " style="left:279px;top:287.99px;font-size:13px;color:#000;letter-spacing:-0.17px"><span class="u">A</span>djust</div>
<svg style="position:absolute;left:466px;top:288px" width="8" height="13"><polyline points="1,1 6,6.5 1,12" fill="none" stroke="#000" stroke-width="1.6"/></svg>
<div class="t " style="left:279px;top:309.99px;font-size:13px;color:#000;letter-spacing:-0.17px"><span class="u">S</span>imilar Colour</div>
<div style="position:absolute;left:261px;top:331px;width:213px;height:1px;background:#b5b4b1"></div>
<div class="t " style="left:279px;top:343.99px;font-size:13px;color:#000;letter-spacing:-0.17px"><span class="u">M</span>easure Colour Chart</div>
<div class="t " style="left:279px;top:365.99px;font-size:13px;color:#000;letter-spacing:-0.17px">Make Synth<span class="u">e</span>tic Colour Chart</div>
<div class="t " style="left:279px;top:387.99px;font-size:13px;color:#000;letter-spacing:-0.17px"><span class="u">P</span>lot ab Scatter</div>
<div style="position:absolute;left:477px;top:205px;width:174px;height:88px;background:#fff;border:1px solid #a5a4a2;box-shadow:2px 2px 2px rgba(0,0,0,.35)"></div>
<div class="t " style="left:500px;top:209.99px;font-size:13px;letter-spacing:-0.17px"><span class="u">E</span>xport</div>
<div class="t " style="left:500px;top:231.99px;font-size:13px;letter-spacing:-0.17px"><span class="u">I</span>mport</div>
<div class="t " style="left:500px;top:253.99px;font-size:13px;letter-spacing:-0.17px"><span class="u">T</span>ransform</div>
<div class="t " style="left:500px;top:275.99px;font-size:13px;letter-spacing:-0.17px"><span class="u">A</span>bsolute to Relative</div>
<div style="position:absolute;left:0px;top:31px;width:1px;height:466px;background:#56627a"></div>
<div style="position:absolute;left:1px;top:88px;width:1px;height:376px;background:#a3a19e"></div>
<div style="position:absolute;left:2px;top:88px;width:1px;height:375px;background:#ffffff"></div>
<div style="position:absolute;left:738px;top:31px;width:1px;height:466px;background:#56627a"></div>
<div style="position:absolute;left:1px;top:495px;width:737px;height:1px;background:#f8f8f7"></div>
<div style="position:absolute;left:0px;top:496px;width:739px;height:1px;background:#56627a"></div>
</body></html>
